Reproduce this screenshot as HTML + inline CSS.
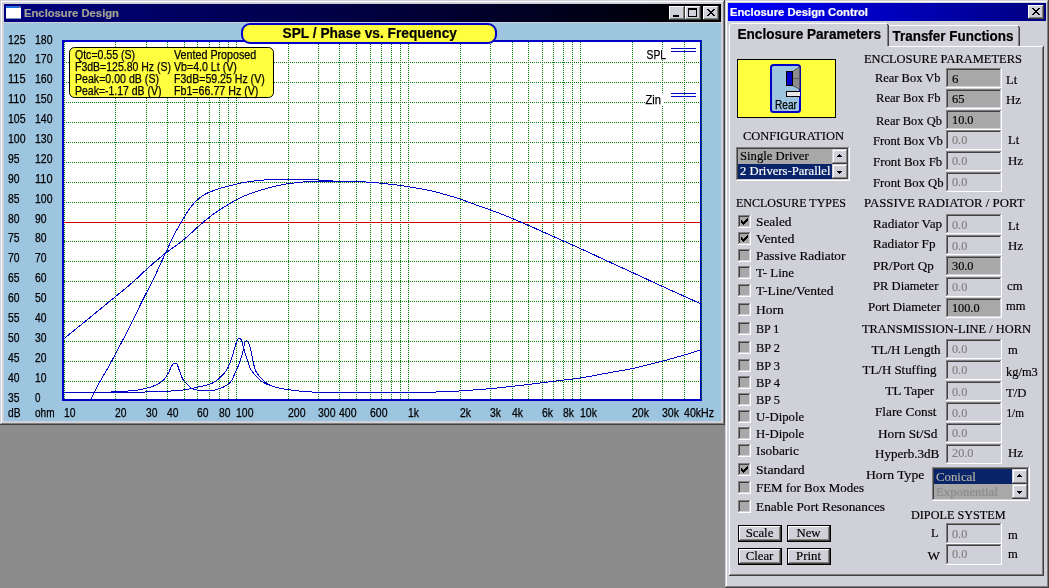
<!DOCTYPE html>
<html><head><meta charset="utf-8"><title>Enclosure Design</title>
<style>
html,body{margin:0;padding:0;background:#8c8c8c;}
body{width:1049px;height:588px;overflow:hidden;font-family:"Liberation Sans",sans-serif;}
svg{display:block;will-change:transform;}
text{white-space:pre;}
</style></head>
<body>
<svg width="1049" height="588" viewBox="0 0 1049 588">
<defs>
<linearGradient id="gradL" x1="0" x2="1" y1="0" y2="0"><stop offset="0" stop-color="#000080"/><stop offset="1" stop-color="#000000"/></linearGradient>
<linearGradient id="gradR" x1="0" x2="1" y1="0" y2="0"><stop offset="0" stop-color="#0000ff"/><stop offset="1" stop-color="#000080"/></linearGradient>
<clipPath id="plotclip"><rect x="64" y="42" width="636" height="357"/></clipPath>
</defs>
<rect x="0" y="0" width="1049" height="588" fill="#8c8c8c" />
<g id="chartwin">
<rect x="0" y="0" width="725" height="425" fill="#d0d0d8" />
<rect x="0" y="424" width="725" height="1" fill="#404040" />
<rect x="724" y="0" width="1" height="425" fill="#404040" />
<rect x="1" y="423" width="723" height="1" fill="#808080" />
<rect x="723" y="1" width="1" height="423" fill="#808080" />
<rect x="1" y="1" width="722" height="1" fill="#ffffff" />
<rect x="1" y="1" width="1" height="422" fill="#ffffff" />
<rect x="4" y="4" width="717" height="18" fill="url(#gradL)" />
<rect x="6" y="6" width="15" height="13" fill="#ffffff" />
<rect x="6" y="6" width="15" height="2" fill="#1e6ee0" />
<rect x="19" y="7" width="1" height="1" fill="#ff6a00" />
<rect x="6" y="18" width="15" height="1" fill="#7d98c8" />
<text x="24" y="17" font-family="Liberation Sans" font-size="11" font-weight="bold" fill="#a4a494" stroke="#a4a494" stroke-width="0.2" text-anchor="start" textLength="95" lengthAdjust="spacingAndGlyphs" >Enclosure Design</text>
<rect x="669" y="6" width="16" height="14" fill="#d0d0d8" />
<rect x="669" y="6" width="15" height="1" fill="#ffffff" />
<rect x="669" y="6" width="1" height="13" fill="#ffffff" />
<rect x="669" y="19" width="16" height="1" fill="#404040" />
<rect x="684" y="6" width="1" height="14" fill="#404040" />
<rect x="670" y="18" width="14" height="1" fill="#808080" />
<rect x="683" y="7" width="1" height="12" fill="#808080" />
<rect x="685" y="6" width="16" height="14" fill="#d0d0d8" />
<rect x="685" y="6" width="15" height="1" fill="#ffffff" />
<rect x="685" y="6" width="1" height="13" fill="#ffffff" />
<rect x="685" y="19" width="16" height="1" fill="#404040" />
<rect x="700" y="6" width="1" height="14" fill="#404040" />
<rect x="686" y="18" width="14" height="1" fill="#808080" />
<rect x="699" y="7" width="1" height="12" fill="#808080" />
<rect x="703" y="6" width="16" height="14" fill="#d0d0d8" />
<rect x="703" y="6" width="15" height="1" fill="#ffffff" />
<rect x="703" y="6" width="1" height="13" fill="#ffffff" />
<rect x="703" y="19" width="16" height="1" fill="#404040" />
<rect x="718" y="6" width="1" height="14" fill="#404040" />
<rect x="704" y="18" width="14" height="1" fill="#808080" />
<rect x="717" y="7" width="1" height="12" fill="#808080" />
<rect x="673" y="15" width="6" height="2" fill="#000" />
<rect x="688" y="8" width="9" height="9" fill="#000" />
<rect x="689" y="10" width="7" height="6" fill="#d0d0d8" />
<rect x="707" y="9" width="2" height="1" fill="#000" />
<rect x="713" y="9" width="2" height="1" fill="#000" />
<rect x="708" y="10" width="2" height="1" fill="#000" />
<rect x="712" y="10" width="2" height="1" fill="#000" />
<rect x="709" y="11" width="2" height="1" fill="#000" />
<rect x="711" y="11" width="2" height="1" fill="#000" />
<rect x="710" y="12" width="2" height="1" fill="#000" />
<rect x="710" y="12" width="2" height="1" fill="#000" />
<rect x="711" y="13" width="2" height="1" fill="#000" />
<rect x="709" y="13" width="2" height="1" fill="#000" />
<rect x="712" y="14" width="2" height="1" fill="#000" />
<rect x="708" y="14" width="2" height="1" fill="#000" />
<rect x="713" y="15" width="2" height="1" fill="#000" />
<rect x="707" y="15" width="2" height="1" fill="#000" />
<rect x="4" y="23" width="717" height="398" fill="#9ec5e0" />
<rect x="62" y="40" width="640" height="361" fill="#0000c8" />
<rect x="64" y="42" width="636" height="357" fill="#ffffff" />
<g stroke="#008000" stroke-width="1" stroke-dasharray="1,1" shape-rendering="crispEdges">
<line x1="64" x2="700" y1="62.5" y2="62.5"/>
<line x1="64" x2="700" y1="82.5" y2="82.5"/>
<line x1="64" x2="700" y1="102.5" y2="102.5"/>
<line x1="64" x2="700" y1="122.5" y2="122.5"/>
<line x1="64" x2="700" y1="142.5" y2="142.5"/>
<line x1="64" x2="700" y1="162.5" y2="162.5"/>
<line x1="64" x2="700" y1="182.5" y2="182.5"/>
<line x1="64" x2="700" y1="202.5" y2="202.5"/>
<line x1="64" x2="700" y1="241.5" y2="241.5"/>
<line x1="64" x2="700" y1="261.5" y2="261.5"/>
<line x1="64" x2="700" y1="281.5" y2="281.5"/>
<line x1="64" x2="700" y1="301.5" y2="301.5"/>
<line x1="64" x2="700" y1="321.5" y2="321.5"/>
<line x1="64" x2="700" y1="341.5" y2="341.5"/>
<line x1="64" x2="700" y1="361.5" y2="361.5"/>
<line x1="64" x2="700" y1="381.5" y2="381.5"/>
<line x1="64.5" x2="64.5" y1="42" y2="399"/>
<line x1="115.5" x2="115.5" y1="42" y2="399"/>
<line x1="146.5" x2="146.5" y1="42" y2="399"/>
<line x1="167.5" x2="167.5" y1="42" y2="399"/>
<line x1="184.5" x2="184.5" y1="42" y2="399"/>
<line x1="197.5" x2="197.5" y1="42" y2="399"/>
<line x1="209.5" x2="209.5" y1="42" y2="399"/>
<line x1="219.5" x2="219.5" y1="42" y2="399"/>
<line x1="228.5" x2="228.5" y1="42" y2="399"/>
<line x1="236.5" x2="236.5" y1="42" y2="399"/>
<line x1="288.5" x2="288.5" y1="42" y2="399"/>
<line x1="318.5" x2="318.5" y1="42" y2="399"/>
<line x1="339.5" x2="339.5" y1="42" y2="399"/>
<line x1="356.5" x2="356.5" y1="42" y2="399"/>
<line x1="370.5" x2="370.5" y1="42" y2="399"/>
<line x1="381.5" x2="381.5" y1="42" y2="399"/>
<line x1="391.5" x2="391.5" y1="42" y2="399"/>
<line x1="400.5" x2="400.5" y1="42" y2="399"/>
<line x1="408.5" x2="408.5" y1="42" y2="399"/>
<line x1="460.5" x2="460.5" y1="42" y2="399"/>
<line x1="490.5" x2="490.5" y1="42" y2="399"/>
<line x1="512.5" x2="512.5" y1="42" y2="399"/>
<line x1="528.5" x2="528.5" y1="42" y2="399"/>
<line x1="542.5" x2="542.5" y1="42" y2="399"/>
<line x1="553.5" x2="553.5" y1="42" y2="399"/>
<line x1="563.5" x2="563.5" y1="42" y2="399"/>
<line x1="572.5" x2="572.5" y1="42" y2="399"/>
<line x1="580.5" x2="580.5" y1="42" y2="399"/>
<line x1="632.5" x2="632.5" y1="42" y2="399"/>
<line x1="662.5" x2="662.5" y1="42" y2="399"/>
<line x1="684.5" x2="684.5" y1="42" y2="399"/>
<line x1="701.5" x2="701.5" y1="42" y2="399"/>
</g>
<rect x="700" y="40" width="1" height="361" fill="#0000c8" />
<rect x="64" y="222" width="636" height="1" fill="#d00000" />
<g id="curves" clip-path="url(#plotclip)">
<path d="M64,338.6 L65,337.8 L66,337.0 L67,336.2 L68,335.4 L69,334.5 L70,333.7 L71,332.9 L72,332.1 L73,331.3 L74,330.5 L75,329.7 L76,328.9 L77,328.0 L78,327.2 L79,326.4 L80,325.6 L81,324.8 L82,324.0 L83,323.2 L84,322.3 L85,321.5 L86,320.7 L87,319.9 L88,319.1 L89,318.3 L90,317.5 L91,316.6 L92,315.8 L93,315.0 L94,314.2 L95,313.4 L96,312.5 L97,311.7 L98,310.9 L99,310.1 L100,309.3 L101,308.4 L102,307.6 L103,306.8 L104,306.0 L105,305.2 L106,304.3 L107,303.5 L108,302.7 L109,301.9 L110,301.1 L111,300.2 L112,299.4 L113,298.6 L114,297.8 L115,297.0 L116,296.1 L117,295.3 L118,294.5 L119,293.7 L120,292.9 L121,292.1 L122,291.3 L123,290.4 L124,289.6 L125,288.8 L126,288.0 L127,287.1 L128,286.3 L129,285.5 L130,284.6 L131,283.7 L132,282.9 L133,282.0 L134,281.1 L135,280.2 L136,279.3 L137,278.3 L138,277.4 L139,276.5 L140,275.5 L141,274.6 L142,273.6 L143,272.7 L144,271.7 L145,270.8 L146,269.9 L147,268.9 L148,268.0 L149,267.1 L150,266.2 L151,265.3 L152,264.5 L153,263.6 L154,262.7 L155,261.9 L156,261.0 L157,260.2 L158,259.3 L159,258.5 L160,257.7 L161,256.8 L162,256.0 L163,255.2 L164,254.4 L165,253.7 L166,252.9 L167,252.1 L168,251.4 L169,250.6 L170,249.9 L171,249.2 L172,248.4 L173,247.7 L174,247.0 L175,246.3 L176,245.5 L177,244.8 L178,244.1 L179,243.3 L180,242.5 L181,241.8 L182,241.0 L183,240.2 L184,239.4 L185,238.5 L186,237.7 L187,236.8 L188,235.9 L189,235.0 L190,234.1 L191,233.2 L192,232.3 L193,231.4 L194,230.5 L195,229.6 L196,228.6 L197,227.7 L198,226.8 L199,225.9 L200,225.0 L201,224.1 L202,223.3 L203,222.4 L204,221.6 L205,220.7 L206,219.9 L207,219.1 L208,218.3 L209,217.5 L210,216.7 L211,216.0 L212,215.2 L213,214.5 L214,213.7 L215,213.0 L216,212.3 L217,211.6 L218,210.9 L219,210.3 L220,209.6 L221,209.0 L222,208.3 L223,207.7 L224,207.1 L225,206.5 L226,205.9 L227,205.3 L228,204.7 L229,204.1 L230,203.5 L231,202.9 L232,202.3 L233,201.7 L234,201.1 L235,200.6 L236,200.0 L237,199.5 L238,199.0 L239,198.4 L240,197.9 L241,197.5 L242,197.0 L243,196.6 L244,196.1 L245,195.7 L246,195.3 L247,194.9 L248,194.5 L249,194.1 L250,193.7 L251,193.4 L252,193.0 L253,192.7 L254,192.3 L255,192.0 L256,191.7 L257,191.3 L258,191.0 L259,190.7 L260,190.4 L261,190.1 L262,189.8 L263,189.5 L264,189.2 L265,188.9 L266,188.6 L267,188.3 L268,188.0 L269,187.8 L270,187.5 L271,187.2 L272,187.0 L273,186.7 L274,186.5 L275,186.3 L276,186.0 L277,185.8 L278,185.6 L279,185.4 L280,185.2 L281,185.0 L282,184.8 L283,184.6 L284,184.4 L285,184.2 L286,184.1 L287,183.9 L288,183.8 L289,183.6 L290,183.5 L291,183.3 L292,183.2 L293,183.1 L294,183.0 L295,182.9 L296,182.7 L297,182.6 L298,182.5 L299,182.4 L300,182.3 L301,182.2 L302,182.1 L303,182.0 L304,181.9 L305,181.8 L306,181.7 L307,181.7 L308,181.6 L309,181.5 L310,181.4 L311,181.4 L312,181.3 L313,181.3 L314,181.2 L315,181.2 L316,181.1 L317,181.1 L318,181.1 L319,181.1 L320,181.0 L321,181.0 L322,181.0 L323,181.0 L324,181.0 L325,181.0 L326,181.0 L327,181.0 L328,181.0 L329,181.0 L330,181.0 L331,181.0 L332,181.0 L333,181.0 L334,181.0 L335,181.0 L336,181.0 L337,181.0 L338,181.0 L339,181.0 L340,181.0 L341,181.0 L342,181.0 L343,181.0 L344,181.0 L345,181.0 L346,181.0 L347,181.0 L348,181.1 L349,181.1 L350,181.1 L351,181.1 L352,181.2 L353,181.2 L354,181.2 L355,181.3 L356,181.3 L357,181.4 L358,181.4 L359,181.5 L360,181.6 L361,181.6 L362,181.7 L363,181.8 L364,181.8 L365,181.9 L366,182.0 L367,182.0 L368,182.1 L369,182.2 L370,182.3 L371,182.3 L372,182.4 L373,182.5 L374,182.6 L375,182.7 L376,182.8 L377,182.8 L378,182.9 L379,183.0 L380,183.1 L381,183.2 L382,183.3 L383,183.4 L384,183.5 L385,183.6 L386,183.7 L387,183.8 L388,184.0 L389,184.1 L390,184.2 L391,184.3 L392,184.4 L393,184.6 L394,184.7 L395,184.8 L396,184.9 L397,185.1 L398,185.2 L399,185.3 L400,185.5 L401,185.6 L402,185.8 L403,185.9 L404,186.1 L405,186.2 L406,186.4 L407,186.5 L408,186.7 L409,186.9 L410,187.0 L411,187.2 L412,187.3 L413,187.5 L414,187.7 L415,187.8 L416,188.0 L417,188.2 L418,188.3 L419,188.5 L420,188.7 L421,188.9 L422,189.1 L423,189.3 L424,189.5 L425,189.7 L426,189.9 L427,190.1 L428,190.3 L429,190.5 L430,190.7 L431,190.9 L432,191.1 L433,191.4 L434,191.6 L435,191.8 L436,192.1 L437,192.3 L438,192.6 L439,192.8 L440,193.1 L441,193.3 L442,193.6 L443,193.9 L444,194.2 L445,194.4 L446,194.7 L447,195.0 L448,195.3 L449,195.6 L450,195.9 L451,196.2 L452,196.5 L453,196.8 L454,197.1 L455,197.4 L456,197.7 L457,198.1 L458,198.4 L459,198.7 L460,199.1 L461,199.4 L462,199.8 L463,200.1 L464,200.5 L465,200.8 L466,201.2 L467,201.6 L468,201.9 L469,202.3 L470,202.7 L471,203.0 L472,203.4 L473,203.8 L474,204.1 L475,204.5 L476,204.9 L477,205.2 L478,205.6 L479,205.9 L480,206.3 L481,206.6 L482,207.0 L483,207.3 L484,207.7 L485,208.0 L486,208.4 L487,208.7 L488,209.1 L489,209.4 L490,209.8 L491,210.2 L492,210.5 L493,210.9 L494,211.3 L495,211.6 L496,212.0 L497,212.4 L498,212.8 L499,213.1 L500,213.5 L501,213.9 L502,214.3 L503,214.7 L504,215.1 L505,215.5 L506,215.9 L507,216.3 L508,216.7 L509,217.1 L510,217.5 L511,218.0 L512,218.4 L513,218.8 L514,219.2 L515,219.6 L516,220.0 L517,220.5 L518,220.9 L519,221.3 L520,221.7 L521,222.2 L522,222.6 L523,223.0 L524,223.5 L525,223.9 L526,224.3 L527,224.8 L528,225.2 L529,225.6 L530,226.1 L531,226.5 L532,227.0 L533,227.4 L534,227.8 L535,228.3 L536,228.7 L537,229.2 L538,229.6 L539,230.1 L540,230.5 L541,231.0 L542,231.4 L543,231.9 L544,232.3 L545,232.8 L546,233.2 L547,233.7 L548,234.1 L549,234.6 L550,235.0 L551,235.5 L552,235.9 L553,236.4 L554,236.8 L555,237.2 L556,237.7 L557,238.1 L558,238.6 L559,239.0 L560,239.5 L561,239.9 L562,240.4 L563,240.8 L564,241.2 L565,241.7 L566,242.1 L567,242.6 L568,243.0 L569,243.5 L570,243.9 L571,244.4 L572,244.8 L573,245.2 L574,245.7 L575,246.1 L576,246.6 L577,247.0 L578,247.5 L579,247.9 L580,248.4 L581,248.9 L582,249.3 L583,249.8 L584,250.2 L585,250.7 L586,251.1 L587,251.6 L588,252.1 L589,252.5 L590,253.0 L591,253.4 L592,253.9 L593,254.4 L594,254.8 L595,255.3 L596,255.8 L597,256.2 L598,256.7 L599,257.2 L600,257.6 L601,258.1 L602,258.6 L603,259.0 L604,259.5 L605,260.0 L606,260.4 L607,260.9 L608,261.3 L609,261.8 L610,262.3 L611,262.7 L612,263.2 L613,263.6 L614,264.1 L615,264.6 L616,265.0 L617,265.5 L618,265.9 L619,266.4 L620,266.9 L621,267.3 L622,267.8 L623,268.2 L624,268.7 L625,269.1 L626,269.6 L627,270.1 L628,270.5 L629,271.0 L630,271.4 L631,271.9 L632,272.4 L633,272.8 L634,273.3 L635,273.7 L636,274.2 L637,274.7 L638,275.1 L639,275.6 L640,276.1 L641,276.5 L642,277.0 L643,277.4 L644,277.9 L645,278.4 L646,278.8 L647,279.3 L648,279.8 L649,280.2 L650,280.7 L651,281.2 L652,281.6 L653,282.1 L654,282.5 L655,283.0 L656,283.5 L657,283.9 L658,284.4 L659,284.9 L660,285.3 L661,285.8 L662,286.2 L663,286.7 L664,287.1 L665,287.6 L666,288.1 L667,288.5 L668,289.0 L669,289.4 L670,289.9 L671,290.3 L672,290.8 L673,291.2 L674,291.7 L675,292.1 L676,292.6 L677,293.0 L678,293.5 L679,293.9 L680,294.4 L681,294.8 L682,295.3 L683,295.7 L684,296.2 L685,296.6 L686,297.1 L687,297.6 L688,298.0 L689,298.5 L690,298.9 L691,299.4 L692,299.8 L693,300.3 L694,300.7 L695,301.2 L696,301.6 L697,302.1 L698,302.5 L699,303.0 L700,303.4" fill="none" stroke="#0000c8" stroke-width="1" stroke-linejoin="round" shape-rendering="crispEdges"/>
<path d="M91,399.0 L92,396.9 L93,394.8 L94,392.7 L95,390.7 L96,388.7 L97,386.8 L98,384.9 L99,383.2 L100,381.4 L101,379.7 L102,378.0 L103,376.3 L104,374.6 L105,372.9 L106,371.2 L107,369.4 L108,367.7 L109,365.9 L110,364.1 L111,362.3 L112,360.5 L113,358.6 L114,356.8 L115,354.9 L116,353.1 L117,351.2 L118,349.3 L119,347.4 L120,345.4 L121,343.5 L122,341.6 L123,339.6 L124,337.7 L125,335.7 L126,333.8 L127,331.8 L128,329.8 L129,327.8 L130,325.8 L131,323.9 L132,321.9 L133,319.9 L134,317.8 L135,315.8 L136,313.8 L137,311.8 L138,309.7 L139,307.7 L140,305.6 L141,303.6 L142,301.6 L143,299.5 L144,297.5 L145,295.6 L146,293.6 L147,291.7 L148,289.7 L149,287.8 L150,285.9 L151,284.0 L152,282.0 L153,280.0 L154,277.9 L155,275.8 L156,273.7 L157,271.5 L158,269.3 L159,267.1 L160,265.0 L161,262.8 L162,260.6 L163,258.5 L164,256.3 L165,254.1 L166,252.0 L167,249.8 L168,247.7 L169,245.5 L170,243.4 L171,241.3 L172,239.2 L173,237.1 L174,235.1 L175,233.2 L176,231.3 L177,229.5 L178,227.7 L179,226.0 L180,224.3 L181,222.6 L182,220.9 L183,219.2 L184,217.5 L185,215.8 L186,214.1 L187,212.5 L188,211.0 L189,209.5 L190,208.2 L191,206.8 L192,205.6 L193,204.4 L194,203.3 L195,202.2 L196,201.2 L197,200.2 L198,199.3 L199,198.5 L200,197.7 L201,196.9 L202,196.2 L203,195.5 L204,194.9 L205,194.3 L206,193.8 L207,193.3 L208,192.8 L209,192.4 L210,192.0 L211,191.6 L212,191.2 L213,190.8 L214,190.4 L215,190.1 L216,189.7 L217,189.4 L218,189.0 L219,188.7 L220,188.4 L221,188.1 L222,187.9 L223,187.6 L224,187.3 L225,187.1 L226,186.8 L227,186.6 L228,186.3 L229,186.0 L230,185.8 L231,185.5 L232,185.2 L233,185.0 L234,184.7 L235,184.5 L236,184.2 L237,184.0 L238,183.8 L239,183.5 L240,183.3 L241,183.1 L242,182.9 L243,182.8 L244,182.6 L245,182.4 L246,182.2 L247,182.1 L248,181.9 L249,181.8 L250,181.6 L251,181.5 L252,181.3 L253,181.2 L254,181.1 L255,180.9 L256,180.8 L257,180.7 L258,180.6 L259,180.4 L260,180.3 L261,180.2 L262,180.1 L263,180.1 L264,180.0 L265,179.9 L266,179.8 L267,179.8 L268,179.7 L269,179.6 L270,179.6 L271,179.5 L272,179.5 L273,179.4 L274,179.4 L275,179.3 L276,179.3 L277,179.3 L278,179.2 L279,179.2 L280,179.2 L281,179.2 L282,179.2 L283,179.2 L284,179.2 L285,179.2 L286,179.2 L287,179.2 L288,179.2 L289,179.2 L290,179.2 L291,179.2 L292,179.2 L293,179.2 L294,179.2 L295,179.2 L296,179.2 L297,179.2 L298,179.2 L299,179.2 L300,179.2 L301,179.2 L302,179.2 L303,179.2 L304,179.2 L305,179.2 L306,179.3 L307,179.3 L308,179.3 L309,179.3 L310,179.4 L311,179.4 L312,179.4 L313,179.5 L314,179.5 L315,179.6 L316,179.7 L317,179.8 L318,179.9 L319,180.1 L320,180.2 L321,180.3 L322,180.5 L323,180.6 L324,180.6 L325,180.7 L326,180.8 L327,180.8 L328,180.8 L329,180.9 L330,180.9 L331,180.9 L332,180.9 L333,181.0 L334,181.0" fill="none" stroke="#0000c8" stroke-width="1" stroke-linejoin="round" shape-rendering="crispEdges"/>
<path d="M64,392.5 L65,392.5 L66,392.5 L67,392.5 L68,392.5 L69,392.5 L70,392.5 L71,392.5 L72,392.5 L73,392.5 L74,392.5 L75,392.5 L76,392.5 L77,392.5 L78,392.5 L79,392.5 L80,392.5 L81,392.5 L82,392.5 L83,392.5 L84,392.5 L85,392.5 L86,392.5 L87,392.5 L88,392.5 L89,392.5 L90,392.5 L91,392.5 L92,392.5 L93,392.5 L94,392.5 L95,392.5 L96,392.5 L97,392.5 L98,392.5 L99,392.5 L100,392.4 L101,392.4 L102,392.4 L103,392.4 L104,392.4 L105,392.4 L106,392.4 L107,392.4 L108,392.4 L109,392.4 L110,392.4 L111,392.4 L112,392.4 L113,392.4 L114,392.4 L115,392.4 L116,392.4 L117,392.4 L118,392.4 L119,392.4 L120,392.4 L121,392.4 L122,392.4 L123,392.4 L124,392.4 L125,392.4 L126,392.4 L127,392.3 L128,392.3 L129,392.3 L130,392.3 L131,392.3 L132,392.3 L133,392.3 L134,392.2 L135,392.2 L136,392.2 L137,392.2 L138,392.1 L139,392.1 L140,392.1 L141,392.1 L142,392.0 L143,392.0 L144,392.0 L145,392.0 L146,391.9 L147,391.9 L148,391.9 L149,391.8 L150,391.8 L151,391.8 L152,391.8 L153,391.7 L154,391.7 L155,391.7 L156,391.6 L157,391.6 L158,391.5 L159,391.5 L160,391.5 L161,391.4 L162,391.4 L163,391.4 L164,391.3 L165,391.3 L166,391.2 L167,391.2 L168,391.2 L169,391.1 L170,391.1 L171,391.0 L172,390.9 L173,390.9 L174,390.8 L175,390.7 L176,390.7 L177,390.6 L178,390.5 L179,390.4 L180,390.3 L181,390.2 L182,390.1 L183,390.0 L184,389.8 L185,389.7 L186,389.5 L187,389.4 L188,389.2 L189,389.0 L190,388.9 L191,388.7 L192,388.5 L193,388.3 L194,388.0 L195,387.8 L196,387.6 L197,387.4 L198,387.1 L199,386.9 L200,386.7 L201,386.5 L202,386.2 L203,386.0 L204,385.8 L205,385.6 L206,385.3 L207,385.1 L208,384.8 L209,384.4 L210,384.1 L211,383.6 L212,383.2 L213,382.7 L214,382.1 L215,381.5 L216,380.9 L217,380.2 L218,379.4 L219,378.5 L220,377.5 L221,376.5 L222,375.5 L223,374.5 L224,373.4 L225,372.2 L226,370.9 L227,369.4 L228,367.5 L229,365.3 L230,362.7 L231,360.1 L232,357.0 L233,353.8 L234,350.5 L235,346.9 L236,343.5 L237,340.8 L238,338.8 L239,338.4 L240,338.5 L241,339.5 L242,341.8 L243,345.7 L244,349.4 L245,352.8 L246,356.0 L247,359.1 L248,362.3 L249,365.2 L250,367.8 L251,369.7 L252,371.2 L253,372.6 L254,373.8 L255,375.0 L256,376.1 L257,377.2 L258,378.2 L259,379.2 L260,380.0 L261,380.8 L262,381.5 L263,382.1 L264,382.7 L265,383.2 L266,383.7 L267,384.2 L268,384.6 L269,385.0 L270,385.4 L271,385.8 L272,386.1 L273,386.5 L274,386.8 L275,387.1 L276,387.3 L277,387.6 L278,387.8 L279,388.0 L280,388.2 L281,388.4 L282,388.6 L283,388.8 L284,389.0 L285,389.1 L286,389.3 L287,389.5 L288,389.6 L289,389.8 L290,389.9 L291,390.1 L292,390.2 L293,390.3 L294,390.5 L295,390.6 L296,390.7 L297,390.8 L298,390.9 L299,391.0 L300,391.1 L301,391.2 L302,391.3 L303,391.4 L304,391.4 L305,391.5 L306,391.6 L307,391.7 L308,391.7 L309,391.8 L310,391.9 L311,391.9 L312,392.0 L313,392.1 L314,392.1 L315,392.1 L316,392.2 L317,392.2 L318,392.3 L319,392.3 L320,392.3 L321,392.3 L322,392.3 L323,392.3 L324,392.3 L325,392.3 L326,392.3 L327,392.3 L328,392.3 L329,392.4 L330,392.4 L331,392.4 L332,392.4 L333,392.4 L334,392.4 L335,392.4 L336,392.4 L337,392.4 L338,392.4 L339,392.4 L340,392.4 L341,392.4 L342,392.4 L343,392.4 L344,392.4 L345,392.4 L346,392.4 L347,392.4 L348,392.4 L349,392.5 L350,392.5 L351,392.5 L352,392.5 L353,392.5 L354,392.5 L355,392.5 L356,392.5 L357,392.5 L358,392.5 L359,392.5 L360,392.5 L361,392.5 L362,392.5 L363,392.5 L364,392.5 L365,392.5 L366,392.5 L367,392.5 L368,392.5 L369,392.5 L370,392.5 L371,392.5 L372,392.5 L373,392.5 L374,392.5 L375,392.5 L376,392.5 L377,392.5 L378,392.5 L379,392.5 L380,392.5 L381,392.5 L382,392.5 L383,392.5 L384,392.5 L385,392.5 L386,392.5 L387,392.5 L388,392.5 L389,392.5 L390,392.5 L391,392.5 L392,392.5 L393,392.5 L394,392.5 L395,392.5 L396,392.5 L397,392.5 L398,392.5 L399,392.5 L400,392.5 L401,392.4 L402,392.4 L403,392.4 L404,392.4 L405,392.4 L406,392.4 L407,392.4 L408,392.4 L409,392.4 L410,392.4 L411,392.4 L412,392.4 L413,392.4 L414,392.4 L415,392.4 L416,392.3 L417,392.3 L418,392.3 L419,392.3 L420,392.3 L421,392.3 L422,392.3 L423,392.3 L424,392.3 L425,392.3 L426,392.2 L427,392.2 L428,392.2 L429,392.2 L430,392.2 L431,392.2 L432,392.2 L433,392.1 L434,392.1 L435,392.0 L436,392.0 L437,391.9 L438,391.9 L439,391.8 L440,391.8 L441,391.7 L442,391.6 L443,391.6 L444,391.5 L445,391.5 L446,391.5 L447,391.4 L448,391.4 L449,391.3 L450,391.3 L451,391.3 L452,391.2 L453,391.2 L454,391.2 L455,391.1 L456,391.1 L457,391.1 L458,391.0 L459,391.0 L460,390.9 L461,390.9 L462,390.8 L463,390.7 L464,390.7 L465,390.6 L466,390.5 L467,390.5 L468,390.4 L469,390.3 L470,390.2 L471,390.2 L472,390.1 L473,390.0 L474,389.9 L475,389.9 L476,389.8 L477,389.7 L478,389.6 L479,389.6 L480,389.5 L481,389.4 L482,389.3 L483,389.3 L484,389.2 L485,389.1 L486,389.0 L487,388.9 L488,388.8 L489,388.7 L490,388.7 L491,388.6 L492,388.5 L493,388.4 L494,388.3 L495,388.2 L496,388.1 L497,388.0 L498,387.9 L499,387.8 L500,387.7 L501,387.5 L502,387.4 L503,387.3 L504,387.2 L505,387.1 L506,387.0 L507,386.9 L508,386.8 L509,386.7 L510,386.6 L511,386.4 L512,386.3 L513,386.2 L514,386.1 L515,386.0 L516,385.9 L517,385.8 L518,385.7 L519,385.6 L520,385.5 L521,385.3 L522,385.2 L523,385.1 L524,385.0 L525,384.9 L526,384.8 L527,384.7 L528,384.5 L529,384.4 L530,384.3 L531,384.2 L532,384.1 L533,383.9 L534,383.8 L535,383.7 L536,383.5 L537,383.4 L538,383.3 L539,383.2 L540,383.0 L541,382.9 L542,382.8 L543,382.6 L544,382.5 L545,382.4 L546,382.3 L547,382.1 L548,382.0 L549,381.9 L550,381.7 L551,381.6 L552,381.5 L553,381.4 L554,381.2 L555,381.1 L556,381.0 L557,380.9 L558,380.8 L559,380.6 L560,380.5 L561,380.4 L562,380.3 L563,380.2 L564,380.1 L565,379.9 L566,379.8 L567,379.7 L568,379.6 L569,379.5 L570,379.4 L571,379.2 L572,379.1 L573,379.0 L574,378.9 L575,378.7 L576,378.6 L577,378.5 L578,378.3 L579,378.2 L580,378.0 L581,377.9 L582,377.7 L583,377.6 L584,377.4 L585,377.3 L586,377.1 L587,376.9 L588,376.8 L589,376.6 L590,376.4 L591,376.2 L592,376.0 L593,375.8 L594,375.6 L595,375.5 L596,375.3 L597,375.1 L598,374.9 L599,374.7 L600,374.5 L601,374.3 L602,374.1 L603,373.9 L604,373.7 L605,373.5 L606,373.3 L607,373.2 L608,373.0 L609,372.8 L610,372.6 L611,372.4 L612,372.3 L613,372.1 L614,371.9 L615,371.7 L616,371.6 L617,371.4 L618,371.2 L619,371.0 L620,370.9 L621,370.7 L622,370.5 L623,370.3 L624,370.1 L625,370.0 L626,369.8 L627,369.6 L628,369.4 L629,369.2 L630,369.0 L631,368.8 L632,368.6 L633,368.4 L634,368.2 L635,367.9 L636,367.7 L637,367.5 L638,367.3 L639,367.0 L640,366.8 L641,366.6 L642,366.3 L643,366.1 L644,365.9 L645,365.6 L646,365.4 L647,365.1 L648,364.9 L649,364.6 L650,364.4 L651,364.1 L652,363.9 L653,363.6 L654,363.3 L655,363.1 L656,362.8 L657,362.6 L658,362.3 L659,362.0 L660,361.8 L661,361.5 L662,361.3 L663,361.0 L664,360.7 L665,360.5 L666,360.2 L667,359.9 L668,359.6 L669,359.4 L670,359.1 L671,358.8 L672,358.5 L673,358.3 L674,358.0 L675,357.7 L676,357.4 L677,357.1 L678,356.8 L679,356.5 L680,356.3 L681,356.0 L682,355.7 L683,355.4 L684,355.1 L685,354.8 L686,354.5 L687,354.2 L688,353.9 L689,353.6 L690,353.3 L691,353.0 L692,352.7 L693,352.4 L694,352.1 L695,351.7 L696,351.4 L697,351.1 L698,350.8 L699,350.5 L700,350.2" fill="none" stroke="#0000c8" stroke-width="1" stroke-linejoin="round" shape-rendering="crispEdges"/>
<path d="M64,392.5 L65,392.5 L66,392.5 L67,392.5 L68,392.5 L69,392.5 L70,392.5 L71,392.5 L72,392.4 L73,392.4 L74,392.4 L75,392.4 L76,392.4 L77,392.4 L78,392.4 L79,392.4 L80,392.4 L81,392.4 L82,392.4 L83,392.4 L84,392.4 L85,392.4 L86,392.4 L87,392.4 L88,392.4 L89,392.3 L90,392.3 L91,392.3 L92,392.3 L93,392.3 L94,392.3 L95,392.3 L96,392.3 L97,392.3 L98,392.3 L99,392.2 L100,392.2 L101,392.2 L102,392.2 L103,392.2 L104,392.2 L105,392.2 L106,392.1 L107,392.1 L108,392.1 L109,392.1 L110,392.0 L111,392.0 L112,391.9 L113,391.9 L114,391.8 L115,391.8 L116,391.7 L117,391.7 L118,391.6 L119,391.6 L120,391.5 L121,391.5 L122,391.4 L123,391.3 L124,391.3 L125,391.2 L126,391.1 L127,391.1 L128,391.0 L129,390.9 L130,390.9 L131,390.8 L132,390.7 L133,390.6 L134,390.5 L135,390.4 L136,390.2 L137,390.1 L138,390.0 L139,389.8 L140,389.6 L141,389.4 L142,389.2 L143,389.0 L144,388.8 L145,388.5 L146,388.3 L147,388.0 L148,387.7 L149,387.5 L150,387.2 L151,386.9 L152,386.5 L153,386.2 L154,385.8 L155,385.4 L156,385.0 L157,384.5 L158,383.9 L159,383.3 L160,382.7 L161,382.0 L162,381.2 L163,380.4 L164,379.4 L165,378.2 L166,376.9 L167,375.3 L168,373.6 L169,371.7 L170,369.5 L171,367.3 L172,365.5 L173,363.8 L174,363.4 L175,363.4 L176,363.4 L177,364.0 L178,366.4 L179,369.4 L180,371.9 L181,374.8 L182,377.5 L183,379.6 L184,381.0 L185,382.2 L186,383.2 L187,384.2 L188,385.3 L189,386.3 L190,387.2 L191,387.9 L192,388.5 L193,389.0 L194,389.4 L195,389.7 L196,389.9 L197,390.1 L198,390.2 L199,390.3 L200,390.4 L201,390.4 L202,390.5 L203,390.5 L204,390.6 L205,390.6 L206,390.6 L207,390.6 L208,390.6 L209,390.5 L210,390.5 L211,390.4 L212,390.3 L213,390.3 L214,390.2 L215,390.0 L216,389.8 L217,389.5 L218,389.1 L219,388.8 L220,388.4 L221,388.1 L222,387.7 L223,387.2 L224,386.8 L225,386.2 L226,385.6 L227,385.0 L228,384.2 L229,383.4 L230,382.4 L231,381.3 L232,379.9 L233,378.0 L234,375.6 L235,373.2 L236,370.9 L237,368.8 L238,366.5 L239,364.1 L240,361.3 L241,358.1 L242,354.6 L243,350.8 L244,345.7 L245,342.0 L246,340.7 L247,340.9 L248,342.2 L249,344.2 L250,347.1 L251,350.9 L252,356.1 L253,361.0 L254,365.4 L255,369.1 L256,371.4 L257,373.1 L258,374.5 L259,375.7 L260,376.9 L261,378.0 L262,379.1 L263,380.1 L264,381.1 L265,381.9 L266,382.7 L267,383.4 L268,384.0 L269,384.6 L270,385.1 L271,385.6 L272,386.0 L273,386.3 L274,386.7 L275,387.0 L276,387.4" fill="none" stroke="#0000c8" stroke-width="1" stroke-linejoin="round" shape-rendering="crispEdges"/>
</g>
<rect x="646" y="49" width="21" height="11" fill="#fff" />
<rect x="645" y="94" width="18" height="11" fill="#fff" />
<text x="646.5" y="59" font-family="Liberation Sans" font-size="12" font-weight="normal" fill="#000" stroke="#000" stroke-width="0.25" text-anchor="start" textLength="19.5" lengthAdjust="spacingAndGlyphs" >SPL</text>
<text x="645.5" y="104" font-family="Liberation Sans" font-size="12" font-weight="normal" fill="#000" stroke="#000" stroke-width="0.25" text-anchor="start" textLength="15.5" lengthAdjust="spacingAndGlyphs" >Zin</text>
<rect x="671" y="48" width="25" height="1" fill="#0000c8" />
<rect x="671" y="51" width="25" height="1" fill="#0000c8" />
<rect x="671" y="93" width="25" height="1" fill="#0000c8" />
<rect x="671" y="96" width="25" height="1" fill="#0000c8" />
<rect x="242" y="24" width="254" height="19" rx="8" ry="8" fill="#ffff40" stroke="#0000c8" stroke-width="2"/>
<text x="282.5" y="38" font-family="Liberation Sans" font-size="14" font-weight="bold" fill="#000" stroke="#000" stroke-width="0.2" text-anchor="start" textLength="174.5" lengthAdjust="spacingAndGlyphs" >SPL / Phase vs. Frequency</text>
<rect x="69.5" y="47.5" width="204" height="50" rx="5" ry="5" fill="#ffff40" stroke="#000" stroke-width="1"/>
<text x="75" y="59" font-family="Liberation Sans" font-size="12" font-weight="normal" fill="#000" stroke="#000" stroke-width="0.25" text-anchor="start" textLength="60" lengthAdjust="spacingAndGlyphs" >Qtc=0.55 (S)</text>
<text x="174" y="59" font-family="Liberation Sans" font-size="12" font-weight="normal" fill="#000" stroke="#000" stroke-width="0.25" text-anchor="start" textLength="82.3" lengthAdjust="spacingAndGlyphs" >Vented Proposed</text>
<text x="75" y="71" font-family="Liberation Sans" font-size="12" font-weight="normal" fill="#000" stroke="#000" stroke-width="0.25" text-anchor="start" textLength="96" lengthAdjust="spacingAndGlyphs" >F3dB=125.80 Hz (S)</text>
<text x="174" y="71" font-family="Liberation Sans" font-size="12" font-weight="normal" fill="#000" stroke="#000" stroke-width="0.25" text-anchor="start" textLength="62.8" lengthAdjust="spacingAndGlyphs" >Vb=4.0 Lt (V)</text>
<text x="75" y="83" font-family="Liberation Sans" font-size="12" font-weight="normal" fill="#000" stroke="#000" stroke-width="0.25" text-anchor="start" textLength="84" lengthAdjust="spacingAndGlyphs" >Peak=0.00 dB (S)</text>
<text x="174" y="83" font-family="Liberation Sans" font-size="12" font-weight="normal" fill="#000" stroke="#000" stroke-width="0.25" text-anchor="start" textLength="90.7" lengthAdjust="spacingAndGlyphs" >F3dB=59.25 Hz (V)</text>
<text x="75" y="95" font-family="Liberation Sans" font-size="12" font-weight="normal" fill="#000" stroke="#000" stroke-width="0.25" text-anchor="start" textLength="86.5" lengthAdjust="spacingAndGlyphs" >Peak=-1.17 dB (V)</text>
<text x="174" y="95" font-family="Liberation Sans" font-size="12" font-weight="normal" fill="#000" stroke="#000" stroke-width="0.25" text-anchor="start" textLength="84.4" lengthAdjust="spacingAndGlyphs" >Fb1=66.77 Hz (V)</text>
<text x="8" y="44" font-family="Liberation Sans" font-size="12" font-weight="normal" fill="#000" stroke="#000" stroke-width="0.25" text-anchor="start" textLength="17.5" lengthAdjust="spacingAndGlyphs" >125</text>
<text x="35" y="44" font-family="Liberation Sans" font-size="12" font-weight="normal" fill="#000" stroke="#000" stroke-width="0.25" text-anchor="start" textLength="17.5" lengthAdjust="spacingAndGlyphs" >180</text>
<text x="8" y="63" font-family="Liberation Sans" font-size="12" font-weight="normal" fill="#000" stroke="#000" stroke-width="0.25" text-anchor="start" textLength="17.5" lengthAdjust="spacingAndGlyphs" >120</text>
<text x="35" y="63" font-family="Liberation Sans" font-size="12" font-weight="normal" fill="#000" stroke="#000" stroke-width="0.25" text-anchor="start" textLength="17.5" lengthAdjust="spacingAndGlyphs" >170</text>
<text x="8" y="83" font-family="Liberation Sans" font-size="12" font-weight="normal" fill="#000" stroke="#000" stroke-width="0.25" text-anchor="start" textLength="17.5" lengthAdjust="spacingAndGlyphs" >115</text>
<text x="35" y="83" font-family="Liberation Sans" font-size="12" font-weight="normal" fill="#000" stroke="#000" stroke-width="0.25" text-anchor="start" textLength="17.5" lengthAdjust="spacingAndGlyphs" >160</text>
<text x="8" y="103" font-family="Liberation Sans" font-size="12" font-weight="normal" fill="#000" stroke="#000" stroke-width="0.25" text-anchor="start" textLength="17.5" lengthAdjust="spacingAndGlyphs" >110</text>
<text x="35" y="103" font-family="Liberation Sans" font-size="12" font-weight="normal" fill="#000" stroke="#000" stroke-width="0.25" text-anchor="start" textLength="17.5" lengthAdjust="spacingAndGlyphs" >150</text>
<text x="8" y="123" font-family="Liberation Sans" font-size="12" font-weight="normal" fill="#000" stroke="#000" stroke-width="0.25" text-anchor="start" textLength="17.5" lengthAdjust="spacingAndGlyphs" >105</text>
<text x="35" y="123" font-family="Liberation Sans" font-size="12" font-weight="normal" fill="#000" stroke="#000" stroke-width="0.25" text-anchor="start" textLength="17.5" lengthAdjust="spacingAndGlyphs" >140</text>
<text x="8" y="143" font-family="Liberation Sans" font-size="12" font-weight="normal" fill="#000" stroke="#000" stroke-width="0.25" text-anchor="start" textLength="17.5" lengthAdjust="spacingAndGlyphs" >100</text>
<text x="35" y="143" font-family="Liberation Sans" font-size="12" font-weight="normal" fill="#000" stroke="#000" stroke-width="0.25" text-anchor="start" textLength="17.5" lengthAdjust="spacingAndGlyphs" >130</text>
<text x="8" y="163" font-family="Liberation Sans" font-size="12" font-weight="normal" fill="#000" stroke="#000" stroke-width="0.25" text-anchor="start" textLength="11.5" lengthAdjust="spacingAndGlyphs" >95</text>
<text x="35" y="163" font-family="Liberation Sans" font-size="12" font-weight="normal" fill="#000" stroke="#000" stroke-width="0.25" text-anchor="start" textLength="17.5" lengthAdjust="spacingAndGlyphs" >120</text>
<text x="8" y="183" font-family="Liberation Sans" font-size="12" font-weight="normal" fill="#000" stroke="#000" stroke-width="0.25" text-anchor="start" textLength="11.5" lengthAdjust="spacingAndGlyphs" >90</text>
<text x="35" y="183" font-family="Liberation Sans" font-size="12" font-weight="normal" fill="#000" stroke="#000" stroke-width="0.25" text-anchor="start" textLength="17.5" lengthAdjust="spacingAndGlyphs" >110</text>
<text x="8" y="203" font-family="Liberation Sans" font-size="12" font-weight="normal" fill="#000" stroke="#000" stroke-width="0.25" text-anchor="start" textLength="11.5" lengthAdjust="spacingAndGlyphs" >85</text>
<text x="35" y="203" font-family="Liberation Sans" font-size="12" font-weight="normal" fill="#000" stroke="#000" stroke-width="0.25" text-anchor="start" textLength="17.5" lengthAdjust="spacingAndGlyphs" >100</text>
<text x="8" y="223" font-family="Liberation Sans" font-size="12" font-weight="normal" fill="#000" stroke="#000" stroke-width="0.25" text-anchor="start" textLength="11.5" lengthAdjust="spacingAndGlyphs" >80</text>
<text x="35" y="223" font-family="Liberation Sans" font-size="12" font-weight="normal" fill="#000" stroke="#000" stroke-width="0.25" text-anchor="start" textLength="11.5" lengthAdjust="spacingAndGlyphs" >90</text>
<text x="8" y="242" font-family="Liberation Sans" font-size="12" font-weight="normal" fill="#000" stroke="#000" stroke-width="0.25" text-anchor="start" textLength="11.5" lengthAdjust="spacingAndGlyphs" >75</text>
<text x="35" y="242" font-family="Liberation Sans" font-size="12" font-weight="normal" fill="#000" stroke="#000" stroke-width="0.25" text-anchor="start" textLength="11.5" lengthAdjust="spacingAndGlyphs" >80</text>
<text x="8" y="262" font-family="Liberation Sans" font-size="12" font-weight="normal" fill="#000" stroke="#000" stroke-width="0.25" text-anchor="start" textLength="11.5" lengthAdjust="spacingAndGlyphs" >70</text>
<text x="35" y="262" font-family="Liberation Sans" font-size="12" font-weight="normal" fill="#000" stroke="#000" stroke-width="0.25" text-anchor="start" textLength="11.5" lengthAdjust="spacingAndGlyphs" >70</text>
<text x="8" y="282" font-family="Liberation Sans" font-size="12" font-weight="normal" fill="#000" stroke="#000" stroke-width="0.25" text-anchor="start" textLength="11.5" lengthAdjust="spacingAndGlyphs" >65</text>
<text x="35" y="282" font-family="Liberation Sans" font-size="12" font-weight="normal" fill="#000" stroke="#000" stroke-width="0.25" text-anchor="start" textLength="11.5" lengthAdjust="spacingAndGlyphs" >60</text>
<text x="8" y="302" font-family="Liberation Sans" font-size="12" font-weight="normal" fill="#000" stroke="#000" stroke-width="0.25" text-anchor="start" textLength="11.5" lengthAdjust="spacingAndGlyphs" >60</text>
<text x="35" y="302" font-family="Liberation Sans" font-size="12" font-weight="normal" fill="#000" stroke="#000" stroke-width="0.25" text-anchor="start" textLength="11.5" lengthAdjust="spacingAndGlyphs" >50</text>
<text x="8" y="322" font-family="Liberation Sans" font-size="12" font-weight="normal" fill="#000" stroke="#000" stroke-width="0.25" text-anchor="start" textLength="11.5" lengthAdjust="spacingAndGlyphs" >55</text>
<text x="35" y="322" font-family="Liberation Sans" font-size="12" font-weight="normal" fill="#000" stroke="#000" stroke-width="0.25" text-anchor="start" textLength="11.5" lengthAdjust="spacingAndGlyphs" >40</text>
<text x="8" y="342" font-family="Liberation Sans" font-size="12" font-weight="normal" fill="#000" stroke="#000" stroke-width="0.25" text-anchor="start" textLength="11.5" lengthAdjust="spacingAndGlyphs" >50</text>
<text x="35" y="342" font-family="Liberation Sans" font-size="12" font-weight="normal" fill="#000" stroke="#000" stroke-width="0.25" text-anchor="start" textLength="11.5" lengthAdjust="spacingAndGlyphs" >30</text>
<text x="8" y="362" font-family="Liberation Sans" font-size="12" font-weight="normal" fill="#000" stroke="#000" stroke-width="0.25" text-anchor="start" textLength="11.5" lengthAdjust="spacingAndGlyphs" >45</text>
<text x="35" y="362" font-family="Liberation Sans" font-size="12" font-weight="normal" fill="#000" stroke="#000" stroke-width="0.25" text-anchor="start" textLength="11.5" lengthAdjust="spacingAndGlyphs" >20</text>
<text x="8" y="382" font-family="Liberation Sans" font-size="12" font-weight="normal" fill="#000" stroke="#000" stroke-width="0.25" text-anchor="start" textLength="11.5" lengthAdjust="spacingAndGlyphs" >40</text>
<text x="35" y="382" font-family="Liberation Sans" font-size="12" font-weight="normal" fill="#000" stroke="#000" stroke-width="0.25" text-anchor="start" textLength="11.5" lengthAdjust="spacingAndGlyphs" >10</text>
<text x="8" y="402" font-family="Liberation Sans" font-size="12" font-weight="normal" fill="#000" stroke="#000" stroke-width="0.25" text-anchor="start" textLength="11.5" lengthAdjust="spacingAndGlyphs" >35</text>
<text x="35" y="402" font-family="Liberation Sans" font-size="12" font-weight="normal" fill="#000" stroke="#000" stroke-width="0.25" text-anchor="start" textLength="5.5" lengthAdjust="spacingAndGlyphs" >0</text>
<text x="8" y="417" font-family="Liberation Sans" font-size="12" font-weight="normal" fill="#000" stroke="#000" stroke-width="0.25" text-anchor="start" textLength="12.5" lengthAdjust="spacingAndGlyphs" >dB</text>
<text x="35" y="417" font-family="Liberation Sans" font-size="12" font-weight="normal" fill="#000" stroke="#000" stroke-width="0.25" text-anchor="start" textLength="19.5" lengthAdjust="spacingAndGlyphs" >ohm</text>
<text x="64" y="417" font-family="Liberation Sans" font-size="12" font-weight="normal" fill="#000" stroke="#000" stroke-width="0.25" text-anchor="start" textLength="11.5" lengthAdjust="spacingAndGlyphs" >10</text>
<text x="115" y="417" font-family="Liberation Sans" font-size="12" font-weight="normal" fill="#000" stroke="#000" stroke-width="0.25" text-anchor="start" textLength="11.5" lengthAdjust="spacingAndGlyphs" >20</text>
<text x="146" y="417" font-family="Liberation Sans" font-size="12" font-weight="normal" fill="#000" stroke="#000" stroke-width="0.25" text-anchor="start" textLength="11.5" lengthAdjust="spacingAndGlyphs" >30</text>
<text x="167" y="417" font-family="Liberation Sans" font-size="12" font-weight="normal" fill="#000" stroke="#000" stroke-width="0.25" text-anchor="start" textLength="11.5" lengthAdjust="spacingAndGlyphs" >40</text>
<text x="197" y="417" font-family="Liberation Sans" font-size="12" font-weight="normal" fill="#000" stroke="#000" stroke-width="0.25" text-anchor="start" textLength="11.5" lengthAdjust="spacingAndGlyphs" >60</text>
<text x="219" y="417" font-family="Liberation Sans" font-size="12" font-weight="normal" fill="#000" stroke="#000" stroke-width="0.25" text-anchor="start" textLength="11.5" lengthAdjust="spacingAndGlyphs" >80</text>
<text x="236" y="417" font-family="Liberation Sans" font-size="12" font-weight="normal" fill="#000" stroke="#000" stroke-width="0.25" text-anchor="start" textLength="17.5" lengthAdjust="spacingAndGlyphs" >100</text>
<text x="288" y="417" font-family="Liberation Sans" font-size="12" font-weight="normal" fill="#000" stroke="#000" stroke-width="0.25" text-anchor="start" textLength="17.5" lengthAdjust="spacingAndGlyphs" >200</text>
<text x="318" y="417" font-family="Liberation Sans" font-size="12" font-weight="normal" fill="#000" stroke="#000" stroke-width="0.25" text-anchor="start" textLength="17.5" lengthAdjust="spacingAndGlyphs" >300</text>
<text x="339" y="417" font-family="Liberation Sans" font-size="12" font-weight="normal" fill="#000" stroke="#000" stroke-width="0.25" text-anchor="start" textLength="17.5" lengthAdjust="spacingAndGlyphs" >400</text>
<text x="370" y="417" font-family="Liberation Sans" font-size="12" font-weight="normal" fill="#000" stroke="#000" stroke-width="0.25" text-anchor="start" textLength="17.5" lengthAdjust="spacingAndGlyphs" >600</text>
<text x="408" y="417" font-family="Liberation Sans" font-size="12" font-weight="normal" fill="#000" stroke="#000" stroke-width="0.25" text-anchor="start" textLength="11" lengthAdjust="spacingAndGlyphs" >1k</text>
<text x="460" y="417" font-family="Liberation Sans" font-size="12" font-weight="normal" fill="#000" stroke="#000" stroke-width="0.25" text-anchor="start" textLength="11" lengthAdjust="spacingAndGlyphs" >2k</text>
<text x="490" y="417" font-family="Liberation Sans" font-size="12" font-weight="normal" fill="#000" stroke="#000" stroke-width="0.25" text-anchor="start" textLength="11" lengthAdjust="spacingAndGlyphs" >3k</text>
<text x="512" y="417" font-family="Liberation Sans" font-size="12" font-weight="normal" fill="#000" stroke="#000" stroke-width="0.25" text-anchor="start" textLength="11" lengthAdjust="spacingAndGlyphs" >4k</text>
<text x="542" y="417" font-family="Liberation Sans" font-size="12" font-weight="normal" fill="#000" stroke="#000" stroke-width="0.25" text-anchor="start" textLength="11" lengthAdjust="spacingAndGlyphs" >6k</text>
<text x="563" y="417" font-family="Liberation Sans" font-size="12" font-weight="normal" fill="#000" stroke="#000" stroke-width="0.25" text-anchor="start" textLength="11" lengthAdjust="spacingAndGlyphs" >8k</text>
<text x="580" y="417" font-family="Liberation Sans" font-size="12" font-weight="normal" fill="#000" stroke="#000" stroke-width="0.25" text-anchor="start" textLength="17" lengthAdjust="spacingAndGlyphs" >10k</text>
<text x="632" y="417" font-family="Liberation Sans" font-size="12" font-weight="normal" fill="#000" stroke="#000" stroke-width="0.25" text-anchor="start" textLength="17" lengthAdjust="spacingAndGlyphs" >20k</text>
<text x="662" y="417" font-family="Liberation Sans" font-size="12" font-weight="normal" fill="#000" stroke="#000" stroke-width="0.25" text-anchor="start" textLength="17" lengthAdjust="spacingAndGlyphs" >30k</text>
<text x="684" y="417" font-family="Liberation Sans" font-size="12" font-weight="normal" fill="#000" stroke="#000" stroke-width="0.25" text-anchor="start" textLength="30" lengthAdjust="spacingAndGlyphs" >40kHz</text>
</g>
<g id="ctrlwin">
<rect x="725" y="0" width="324" height="588" fill="#d0d0d8" />
<rect x="725" y="587" width="324" height="1" fill="#404040" />
<rect x="1048" y="0" width="1" height="588" fill="#404040" />
<rect x="726" y="586" width="322" height="1" fill="#808080" />
<rect x="1047" y="1" width="1" height="586" fill="#808080" />
<rect x="726" y="1" width="321" height="1" fill="#ffffff" />
<rect x="726" y="1" width="1" height="585" fill="#ffffff" />
<rect x="728" y="3" width="318" height="18" fill="url(#gradR)" />
<text x="730" y="16" font-family="Liberation Sans" font-size="11" font-weight="bold" fill="#fff" stroke="#fff" stroke-width="0.2" text-anchor="start" textLength="138" lengthAdjust="spacingAndGlyphs" >Enclosure Design Control</text>
<rect x="1028" y="5" width="16" height="14" fill="#d0d0d8" />
<rect x="1028" y="5" width="15" height="1" fill="#ffffff" />
<rect x="1028" y="5" width="1" height="13" fill="#ffffff" />
<rect x="1028" y="18" width="16" height="1" fill="#404040" />
<rect x="1043" y="5" width="1" height="14" fill="#404040" />
<rect x="1029" y="17" width="14" height="1" fill="#808080" />
<rect x="1042" y="6" width="1" height="12" fill="#808080" />
<rect x="1032" y="8" width="2" height="1" fill="#000" />
<rect x="1038" y="8" width="2" height="1" fill="#000" />
<rect x="1033" y="9" width="2" height="1" fill="#000" />
<rect x="1037" y="9" width="2" height="1" fill="#000" />
<rect x="1034" y="10" width="2" height="1" fill="#000" />
<rect x="1036" y="10" width="2" height="1" fill="#000" />
<rect x="1035" y="11" width="2" height="1" fill="#000" />
<rect x="1035" y="11" width="2" height="1" fill="#000" />
<rect x="1036" y="12" width="2" height="1" fill="#000" />
<rect x="1034" y="12" width="2" height="1" fill="#000" />
<rect x="1037" y="13" width="2" height="1" fill="#000" />
<rect x="1033" y="13" width="2" height="1" fill="#000" />
<rect x="1038" y="14" width="2" height="1" fill="#000" />
<rect x="1032" y="14" width="2" height="1" fill="#000" />
<rect x="729" y="46" width="314" height="1" fill="#ffffff" />
<rect x="729" y="46" width="1" height="529" fill="#ffffff" />
<rect x="729" y="575" width="315" height="1" fill="#404040" />
<rect x="1043" y="46" width="1" height="530" fill="#404040" />
<rect x="730" y="574" width="313" height="1" fill="#808080" />
<rect x="1042" y="47" width="1" height="528" fill="#808080" />
<rect x="729" y="23" width="160" height="24" fill="#d0d0d8" />
<rect x="731" y="23" width="156" height="1" fill="#ffffff" />
<rect x="729" y="25" width="1" height="22" fill="#ffffff" />
<rect x="730" y="24" width="1" height="1" fill="#ffffff" />
<rect x="888" y="25" width="1" height="21" fill="#404040" />
<rect x="887" y="24" width="1" height="22" fill="#808080" />
<rect x="887" y="24" width="1" height="1" fill="#404040" />
<rect x="889" y="25" width="129" height="1" fill="#ffffff" />
<rect x="1019" y="27" width="1" height="19" fill="#404040" />
<rect x="1018" y="26" width="1" height="20" fill="#808080" />
<rect x="1018" y="26" width="1" height="1" fill="#404040" />
<text x="737.5" y="39" font-family="Liberation Sans" font-size="14" font-weight="bold" fill="#000" stroke="#000" stroke-width="0.2" text-anchor="start" textLength="143.5" lengthAdjust="spacingAndGlyphs" >Enclosure Parameters</text>
<text x="892.5" y="41" font-family="Liberation Sans" font-size="14" font-weight="bold" fill="#000" stroke="#000" stroke-width="0.2" text-anchor="start" textLength="121" lengthAdjust="spacingAndGlyphs" >Transfer Functions</text>
<rect x="737" y="59" width="99" height="59" fill="#000" />
<rect x="738" y="60" width="97" height="57" fill="#ffff40" />
<rect x="770" y="64" width="31" height="49" rx="3.5" ry="3.5" fill="#0000c8"/>
<rect x="772" y="66" width="27" height="45" rx="1.5" ry="1.5" fill="#9ec5e0"/>
<path d="M792.5,71.5 L799.8,66.8 L799.8,89.2 L792.5,85.5 Z" fill="#8c8c8c" stroke="#404040" stroke-width="0.8"/>
<path d="M793,78.5 L799.5,78.5" stroke="#606060" stroke-width="1"/>
<rect x="786" y="71" width="7" height="15" fill="#000" />
<rect x="787" y="72" width="5" height="13" rx="1" fill="#0000c8"/>
<rect x="786" y="91" width="14" height="6" fill="#000" />
<rect x="787" y="92" width="13" height="4" fill="#e8e8e8" />
<text x="775" y="109" font-family="Liberation Sans" font-size="12" font-weight="normal" fill="#000" stroke="#000" stroke-width="0.25" text-anchor="start" textLength="22" lengthAdjust="spacingAndGlyphs" >Rear</text>
<text x="743" y="140" font-family="Liberation Serif" font-size="13.5" font-weight="normal" fill="#000" stroke="#000" stroke-width="0.18" text-anchor="start" textLength="101" lengthAdjust="spacingAndGlyphs" >CONFIGURATION</text>
<rect x="736" y="147" width="114" height="34" fill="#a8a8a8" />
<rect x="736" y="147" width="114" height="1" fill="#808080" />
<rect x="736" y="147" width="1" height="34" fill="#808080" />
<rect x="737" y="148" width="112" height="1" fill="#404040" />
<rect x="737" y="148" width="1" height="32" fill="#404040" />
<rect x="736" y="180" width="114" height="1" fill="#ffffff" />
<rect x="849" y="147" width="1" height="34" fill="#ffffff" />
<rect x="737" y="179" width="112" height="1" fill="#d0d0d8" />
<rect x="848" y="148" width="1" height="32" fill="#d0d0d8" />
<rect x="738" y="164" width="94" height="15" fill="#0a246a" />
<text x="740" y="160" font-family="Liberation Serif" font-size="13.5" font-weight="normal" fill="#000" stroke="#000" stroke-width="0.18" text-anchor="start" textLength="68.7" lengthAdjust="spacingAndGlyphs" >Single Driver</text>
<text x="740" y="175" font-family="Liberation Serif" font-size="13.5" font-weight="normal" fill="#fff" stroke="#fff" stroke-width="0.18" text-anchor="start" textLength="90.4" lengthAdjust="spacingAndGlyphs" >2 Drivers-Parallel</text>
<rect x="832" y="149" width="16" height="15" fill="#d0d0d8" />
<rect x="833" y="150" width="13" height="1" fill="#ffffff" />
<rect x="833" y="150" width="1" height="12" fill="#ffffff" />
<rect x="832" y="163" width="16" height="1" fill="#404040" />
<rect x="847" y="149" width="1" height="15" fill="#404040" />
<rect x="833" y="162" width="14" height="1" fill="#808080" />
<rect x="846" y="150" width="1" height="13" fill="#808080" />
<rect x="839" y="154" width="1" height="1" fill="#000" />
<rect x="838" y="155" width="3" height="1" fill="#000" />
<rect x="837" y="156" width="5" height="1" fill="#000" />
<rect x="832" y="164" width="16" height="15" fill="#d0d0d8" />
<rect x="833" y="165" width="13" height="1" fill="#ffffff" />
<rect x="833" y="165" width="1" height="12" fill="#ffffff" />
<rect x="832" y="178" width="16" height="1" fill="#404040" />
<rect x="847" y="164" width="1" height="15" fill="#404040" />
<rect x="833" y="177" width="14" height="1" fill="#808080" />
<rect x="846" y="165" width="1" height="13" fill="#808080" />
<rect x="837" y="171" width="5" height="1" fill="#000" />
<rect x="838" y="172" width="3" height="1" fill="#000" />
<rect x="839" y="173" width="1" height="1" fill="#000" />
<text x="736" y="207" font-family="Liberation Serif" font-size="13.5" font-weight="normal" fill="#000" stroke="#000" stroke-width="0.18" text-anchor="start" textLength="110" lengthAdjust="spacingAndGlyphs" >ENCLOSURE TYPES</text>
<rect x="738" y="215" width="13" height="13" fill="#a8a8a8" />
<rect x="738" y="215" width="13" height="1" fill="#808080" />
<rect x="738" y="215" width="1" height="13" fill="#808080" />
<rect x="739" y="216" width="11" height="1" fill="#404040" />
<rect x="739" y="216" width="1" height="11" fill="#404040" />
<rect x="738" y="227" width="13" height="1" fill="#ffffff" />
<rect x="750" y="215" width="1" height="13" fill="#ffffff" />
<rect x="739" y="226" width="11" height="1" fill="#d0d0d8" />
<rect x="749" y="216" width="1" height="11" fill="#d0d0d8" />
<rect x="741" y="220" width="1" height="3" fill="#000" />
<rect x="742" y="221" width="1" height="3" fill="#000" />
<rect x="743" y="222" width="1" height="3" fill="#000" />
<rect x="744" y="221" width="1" height="3" fill="#000" />
<rect x="745" y="220" width="1" height="3" fill="#000" />
<rect x="746" y="219" width="1" height="3" fill="#000" />
<rect x="747" y="218" width="1" height="3" fill="#000" />
<text x="756" y="226" font-family="Liberation Serif" font-size="13.5" font-weight="normal" fill="#000" stroke="#000" stroke-width="0.18" text-anchor="start" textLength="35.5" lengthAdjust="spacingAndGlyphs" >Sealed</text>
<rect x="738" y="232" width="13" height="13" fill="#a8a8a8" />
<rect x="738" y="232" width="13" height="1" fill="#808080" />
<rect x="738" y="232" width="1" height="13" fill="#808080" />
<rect x="739" y="233" width="11" height="1" fill="#404040" />
<rect x="739" y="233" width="1" height="11" fill="#404040" />
<rect x="738" y="244" width="13" height="1" fill="#ffffff" />
<rect x="750" y="232" width="1" height="13" fill="#ffffff" />
<rect x="739" y="243" width="11" height="1" fill="#d0d0d8" />
<rect x="749" y="233" width="1" height="11" fill="#d0d0d8" />
<rect x="741" y="237" width="1" height="3" fill="#000" />
<rect x="742" y="238" width="1" height="3" fill="#000" />
<rect x="743" y="239" width="1" height="3" fill="#000" />
<rect x="744" y="238" width="1" height="3" fill="#000" />
<rect x="745" y="237" width="1" height="3" fill="#000" />
<rect x="746" y="236" width="1" height="3" fill="#000" />
<rect x="747" y="235" width="1" height="3" fill="#000" />
<text x="756" y="243" font-family="Liberation Serif" font-size="13.5" font-weight="normal" fill="#000" stroke="#000" stroke-width="0.18" text-anchor="start" textLength="38.5" lengthAdjust="spacingAndGlyphs" >Vented</text>
<rect x="738" y="249" width="13" height="13" fill="#a8a8a8" />
<rect x="738" y="249" width="13" height="1" fill="#808080" />
<rect x="738" y="249" width="1" height="13" fill="#808080" />
<rect x="739" y="250" width="11" height="1" fill="#404040" />
<rect x="739" y="250" width="1" height="11" fill="#404040" />
<rect x="738" y="261" width="13" height="1" fill="#ffffff" />
<rect x="750" y="249" width="1" height="13" fill="#ffffff" />
<rect x="739" y="260" width="11" height="1" fill="#d0d0d8" />
<rect x="749" y="250" width="1" height="11" fill="#d0d0d8" />
<text x="756" y="260" font-family="Liberation Serif" font-size="13.5" font-weight="normal" fill="#000" stroke="#000" stroke-width="0.18" text-anchor="start" textLength="89.5" lengthAdjust="spacingAndGlyphs" >Passive Radiator</text>
<rect x="738" y="266" width="13" height="13" fill="#a8a8a8" />
<rect x="738" y="266" width="13" height="1" fill="#808080" />
<rect x="738" y="266" width="1" height="13" fill="#808080" />
<rect x="739" y="267" width="11" height="1" fill="#404040" />
<rect x="739" y="267" width="1" height="11" fill="#404040" />
<rect x="738" y="278" width="13" height="1" fill="#ffffff" />
<rect x="750" y="266" width="1" height="13" fill="#ffffff" />
<rect x="739" y="277" width="11" height="1" fill="#d0d0d8" />
<rect x="749" y="267" width="1" height="11" fill="#d0d0d8" />
<text x="756" y="277" font-family="Liberation Serif" font-size="13.5" font-weight="normal" fill="#000" stroke="#000" stroke-width="0.18" text-anchor="start" textLength="38" lengthAdjust="spacingAndGlyphs" >T- Line</text>
<rect x="738" y="284" width="13" height="13" fill="#a8a8a8" />
<rect x="738" y="284" width="13" height="1" fill="#808080" />
<rect x="738" y="284" width="1" height="13" fill="#808080" />
<rect x="739" y="285" width="11" height="1" fill="#404040" />
<rect x="739" y="285" width="1" height="11" fill="#404040" />
<rect x="738" y="296" width="13" height="1" fill="#ffffff" />
<rect x="750" y="284" width="1" height="13" fill="#ffffff" />
<rect x="739" y="295" width="11" height="1" fill="#d0d0d8" />
<rect x="749" y="285" width="1" height="11" fill="#d0d0d8" />
<text x="756" y="295" font-family="Liberation Serif" font-size="13.5" font-weight="normal" fill="#000" stroke="#000" stroke-width="0.18" text-anchor="start" textLength="77.5" lengthAdjust="spacingAndGlyphs" >T-Line/Vented</text>
<rect x="738" y="303" width="13" height="13" fill="#a8a8a8" />
<rect x="738" y="303" width="13" height="1" fill="#808080" />
<rect x="738" y="303" width="1" height="13" fill="#808080" />
<rect x="739" y="304" width="11" height="1" fill="#404040" />
<rect x="739" y="304" width="1" height="11" fill="#404040" />
<rect x="738" y="315" width="13" height="1" fill="#ffffff" />
<rect x="750" y="303" width="1" height="13" fill="#ffffff" />
<rect x="739" y="314" width="11" height="1" fill="#d0d0d8" />
<rect x="749" y="304" width="1" height="11" fill="#d0d0d8" />
<text x="756" y="314" font-family="Liberation Serif" font-size="13.5" font-weight="normal" fill="#000" stroke="#000" stroke-width="0.18" text-anchor="start" textLength="27.8" lengthAdjust="spacingAndGlyphs" >Horn</text>
<rect x="738" y="322" width="13" height="13" fill="#a8a8a8" />
<rect x="738" y="322" width="13" height="1" fill="#808080" />
<rect x="738" y="322" width="1" height="13" fill="#808080" />
<rect x="739" y="323" width="11" height="1" fill="#404040" />
<rect x="739" y="323" width="1" height="11" fill="#404040" />
<rect x="738" y="334" width="13" height="1" fill="#ffffff" />
<rect x="750" y="322" width="1" height="13" fill="#ffffff" />
<rect x="739" y="333" width="11" height="1" fill="#d0d0d8" />
<rect x="749" y="323" width="1" height="11" fill="#d0d0d8" />
<text x="756" y="333" font-family="Liberation Serif" font-size="13.5" font-weight="normal" fill="#000" stroke="#000" stroke-width="0.18" text-anchor="start" textLength="23.2" lengthAdjust="spacingAndGlyphs" >BP 1</text>
<rect x="738" y="341" width="13" height="13" fill="#a8a8a8" />
<rect x="738" y="341" width="13" height="1" fill="#808080" />
<rect x="738" y="341" width="1" height="13" fill="#808080" />
<rect x="739" y="342" width="11" height="1" fill="#404040" />
<rect x="739" y="342" width="1" height="11" fill="#404040" />
<rect x="738" y="353" width="13" height="1" fill="#ffffff" />
<rect x="750" y="341" width="1" height="13" fill="#ffffff" />
<rect x="739" y="352" width="11" height="1" fill="#d0d0d8" />
<rect x="749" y="342" width="1" height="11" fill="#d0d0d8" />
<text x="756" y="352" font-family="Liberation Serif" font-size="13.5" font-weight="normal" fill="#000" stroke="#000" stroke-width="0.18" text-anchor="start" textLength="24" lengthAdjust="spacingAndGlyphs" >BP 2</text>
<rect x="738" y="359" width="13" height="13" fill="#a8a8a8" />
<rect x="738" y="359" width="13" height="1" fill="#808080" />
<rect x="738" y="359" width="1" height="13" fill="#808080" />
<rect x="739" y="360" width="11" height="1" fill="#404040" />
<rect x="739" y="360" width="1" height="11" fill="#404040" />
<rect x="738" y="371" width="13" height="1" fill="#ffffff" />
<rect x="750" y="359" width="1" height="13" fill="#ffffff" />
<rect x="739" y="370" width="11" height="1" fill="#d0d0d8" />
<rect x="749" y="360" width="1" height="11" fill="#d0d0d8" />
<text x="756" y="370" font-family="Liberation Serif" font-size="13.5" font-weight="normal" fill="#000" stroke="#000" stroke-width="0.18" text-anchor="start" textLength="24" lengthAdjust="spacingAndGlyphs" >BP 3</text>
<rect x="738" y="376" width="13" height="13" fill="#a8a8a8" />
<rect x="738" y="376" width="13" height="1" fill="#808080" />
<rect x="738" y="376" width="1" height="13" fill="#808080" />
<rect x="739" y="377" width="11" height="1" fill="#404040" />
<rect x="739" y="377" width="1" height="11" fill="#404040" />
<rect x="738" y="388" width="13" height="1" fill="#ffffff" />
<rect x="750" y="376" width="1" height="13" fill="#ffffff" />
<rect x="739" y="387" width="11" height="1" fill="#d0d0d8" />
<rect x="749" y="377" width="1" height="11" fill="#d0d0d8" />
<text x="756" y="387" font-family="Liberation Serif" font-size="13.5" font-weight="normal" fill="#000" stroke="#000" stroke-width="0.18" text-anchor="start" textLength="24" lengthAdjust="spacingAndGlyphs" >BP 4</text>
<rect x="738" y="393" width="13" height="13" fill="#a8a8a8" />
<rect x="738" y="393" width="13" height="1" fill="#808080" />
<rect x="738" y="393" width="1" height="13" fill="#808080" />
<rect x="739" y="394" width="11" height="1" fill="#404040" />
<rect x="739" y="394" width="1" height="11" fill="#404040" />
<rect x="738" y="405" width="13" height="1" fill="#ffffff" />
<rect x="750" y="393" width="1" height="13" fill="#ffffff" />
<rect x="739" y="404" width="11" height="1" fill="#d0d0d8" />
<rect x="749" y="394" width="1" height="11" fill="#d0d0d8" />
<text x="756" y="404" font-family="Liberation Serif" font-size="13.5" font-weight="normal" fill="#000" stroke="#000" stroke-width="0.18" text-anchor="start" textLength="24" lengthAdjust="spacingAndGlyphs" >BP 5</text>
<rect x="738" y="410" width="13" height="13" fill="#a8a8a8" />
<rect x="738" y="410" width="13" height="1" fill="#808080" />
<rect x="738" y="410" width="1" height="13" fill="#808080" />
<rect x="739" y="411" width="11" height="1" fill="#404040" />
<rect x="739" y="411" width="1" height="11" fill="#404040" />
<rect x="738" y="422" width="13" height="1" fill="#ffffff" />
<rect x="750" y="410" width="1" height="13" fill="#ffffff" />
<rect x="739" y="421" width="11" height="1" fill="#d0d0d8" />
<rect x="749" y="411" width="1" height="11" fill="#d0d0d8" />
<text x="756" y="421" font-family="Liberation Serif" font-size="13.5" font-weight="normal" fill="#000" stroke="#000" stroke-width="0.18" text-anchor="start" textLength="48.2" lengthAdjust="spacingAndGlyphs" >U-Dipole</text>
<rect x="738" y="427" width="13" height="13" fill="#a8a8a8" />
<rect x="738" y="427" width="13" height="1" fill="#808080" />
<rect x="738" y="427" width="1" height="13" fill="#808080" />
<rect x="739" y="428" width="11" height="1" fill="#404040" />
<rect x="739" y="428" width="1" height="11" fill="#404040" />
<rect x="738" y="439" width="13" height="1" fill="#ffffff" />
<rect x="750" y="427" width="1" height="13" fill="#ffffff" />
<rect x="739" y="438" width="11" height="1" fill="#d0d0d8" />
<rect x="749" y="428" width="1" height="11" fill="#d0d0d8" />
<text x="756" y="438" font-family="Liberation Serif" font-size="13.5" font-weight="normal" fill="#000" stroke="#000" stroke-width="0.18" text-anchor="start" textLength="48.2" lengthAdjust="spacingAndGlyphs" >H-Dipole</text>
<rect x="738" y="444" width="13" height="13" fill="#a8a8a8" />
<rect x="738" y="444" width="13" height="1" fill="#808080" />
<rect x="738" y="444" width="1" height="13" fill="#808080" />
<rect x="739" y="445" width="11" height="1" fill="#404040" />
<rect x="739" y="445" width="1" height="11" fill="#404040" />
<rect x="738" y="456" width="13" height="1" fill="#ffffff" />
<rect x="750" y="444" width="1" height="13" fill="#ffffff" />
<rect x="739" y="455" width="11" height="1" fill="#d0d0d8" />
<rect x="749" y="445" width="1" height="11" fill="#d0d0d8" />
<text x="756" y="455" font-family="Liberation Serif" font-size="13.5" font-weight="normal" fill="#000" stroke="#000" stroke-width="0.18" text-anchor="start" textLength="42.8" lengthAdjust="spacingAndGlyphs" >Isobaric</text>
<rect x="738" y="463" width="13" height="13" fill="#a8a8a8" />
<rect x="738" y="463" width="13" height="1" fill="#808080" />
<rect x="738" y="463" width="1" height="13" fill="#808080" />
<rect x="739" y="464" width="11" height="1" fill="#404040" />
<rect x="739" y="464" width="1" height="11" fill="#404040" />
<rect x="738" y="475" width="13" height="1" fill="#ffffff" />
<rect x="750" y="463" width="1" height="13" fill="#ffffff" />
<rect x="739" y="474" width="11" height="1" fill="#d0d0d8" />
<rect x="749" y="464" width="1" height="11" fill="#d0d0d8" />
<rect x="741" y="468" width="1" height="3" fill="#000" />
<rect x="742" y="469" width="1" height="3" fill="#000" />
<rect x="743" y="470" width="1" height="3" fill="#000" />
<rect x="744" y="469" width="1" height="3" fill="#000" />
<rect x="745" y="468" width="1" height="3" fill="#000" />
<rect x="746" y="467" width="1" height="3" fill="#000" />
<rect x="747" y="466" width="1" height="3" fill="#000" />
<text x="756" y="474" font-family="Liberation Serif" font-size="13.5" font-weight="normal" fill="#000" stroke="#000" stroke-width="0.18" text-anchor="start" textLength="48.7" lengthAdjust="spacingAndGlyphs" >Standard</text>
<rect x="738" y="481" width="13" height="13" fill="#a8a8a8" />
<rect x="738" y="481" width="13" height="1" fill="#808080" />
<rect x="738" y="481" width="1" height="13" fill="#808080" />
<rect x="739" y="482" width="11" height="1" fill="#404040" />
<rect x="739" y="482" width="1" height="11" fill="#404040" />
<rect x="738" y="493" width="13" height="1" fill="#ffffff" />
<rect x="750" y="481" width="1" height="13" fill="#ffffff" />
<rect x="739" y="492" width="11" height="1" fill="#d0d0d8" />
<rect x="749" y="482" width="1" height="11" fill="#d0d0d8" />
<text x="756" y="492" font-family="Liberation Serif" font-size="13.5" font-weight="normal" fill="#000" stroke="#000" stroke-width="0.18" text-anchor="start" textLength="108" lengthAdjust="spacingAndGlyphs" >FEM for Box Modes</text>
<rect x="738" y="500" width="13" height="13" fill="#a8a8a8" />
<rect x="738" y="500" width="13" height="1" fill="#808080" />
<rect x="738" y="500" width="1" height="13" fill="#808080" />
<rect x="739" y="501" width="11" height="1" fill="#404040" />
<rect x="739" y="501" width="1" height="11" fill="#404040" />
<rect x="738" y="512" width="13" height="1" fill="#ffffff" />
<rect x="750" y="500" width="1" height="13" fill="#ffffff" />
<rect x="739" y="511" width="11" height="1" fill="#d0d0d8" />
<rect x="749" y="501" width="1" height="11" fill="#d0d0d8" />
<text x="756" y="511" font-family="Liberation Serif" font-size="13.5" font-weight="normal" fill="#000" stroke="#000" stroke-width="0.18" text-anchor="start" textLength="129" lengthAdjust="spacingAndGlyphs" >Enable Port Resonances</text>
<rect x="738" y="525" width="44" height="17" fill="#000" />
<rect x="739" y="526" width="42" height="15" fill="#d0d0d8" />
<rect x="739" y="526" width="41" height="1" fill="#ffffff" />
<rect x="739" y="526" width="1" height="14" fill="#ffffff" />
<rect x="739" y="540" width="42" height="1" fill="#404040" />
<rect x="780" y="526" width="1" height="15" fill="#404040" />
<rect x="740" y="539" width="40" height="1" fill="#808080" />
<rect x="779" y="527" width="1" height="13" fill="#808080" />
<text x="759.5" y="537" font-family="Liberation Serif" font-size="13.5" font-weight="normal" fill="#000" stroke="#000" stroke-width="0.18" text-anchor="middle" textLength="27.7" lengthAdjust="spacingAndGlyphs" >Scale</text>
<rect x="787" y="525" width="44" height="17" fill="#000" />
<rect x="788" y="526" width="42" height="15" fill="#d0d0d8" />
<rect x="788" y="526" width="41" height="1" fill="#ffffff" />
<rect x="788" y="526" width="1" height="14" fill="#ffffff" />
<rect x="788" y="540" width="42" height="1" fill="#404040" />
<rect x="829" y="526" width="1" height="15" fill="#404040" />
<rect x="789" y="539" width="40" height="1" fill="#808080" />
<rect x="828" y="527" width="1" height="13" fill="#808080" />
<text x="808.5" y="537" font-family="Liberation Serif" font-size="13.5" font-weight="normal" fill="#000" stroke="#000" stroke-width="0.18" text-anchor="middle" textLength="24.2" lengthAdjust="spacingAndGlyphs" >New</text>
<rect x="738" y="548" width="44" height="17" fill="#000" />
<rect x="739" y="549" width="42" height="15" fill="#d0d0d8" />
<rect x="739" y="549" width="41" height="1" fill="#ffffff" />
<rect x="739" y="549" width="1" height="14" fill="#ffffff" />
<rect x="739" y="563" width="42" height="1" fill="#404040" />
<rect x="780" y="549" width="1" height="15" fill="#404040" />
<rect x="740" y="562" width="40" height="1" fill="#808080" />
<rect x="779" y="550" width="1" height="13" fill="#808080" />
<text x="759.5" y="560" font-family="Liberation Serif" font-size="13.5" font-weight="normal" fill="#000" stroke="#000" stroke-width="0.18" text-anchor="middle" textLength="27.7" lengthAdjust="spacingAndGlyphs" >Clear</text>
<rect x="787" y="548" width="44" height="17" fill="#000" />
<rect x="788" y="549" width="42" height="15" fill="#d0d0d8" />
<rect x="788" y="549" width="41" height="1" fill="#ffffff" />
<rect x="788" y="549" width="1" height="14" fill="#ffffff" />
<rect x="788" y="563" width="42" height="1" fill="#404040" />
<rect x="829" y="549" width="1" height="15" fill="#404040" />
<rect x="789" y="562" width="40" height="1" fill="#808080" />
<rect x="828" y="550" width="1" height="13" fill="#808080" />
<text x="808.5" y="560" font-family="Liberation Serif" font-size="13.5" font-weight="normal" fill="#000" stroke="#000" stroke-width="0.18" text-anchor="middle" textLength="24.9" lengthAdjust="spacingAndGlyphs" >Print</text>
<text x="864" y="63" font-family="Liberation Serif" font-size="13.5" font-weight="normal" fill="#000" stroke="#000" stroke-width="0.18" text-anchor="start" textLength="158" lengthAdjust="spacingAndGlyphs" >ENCLOSURE PARAMETERS</text>
<rect x="946" y="68" width="56" height="20" fill="#a8a8a8" />
<rect x="946" y="68" width="56" height="1" fill="#808080" />
<rect x="946" y="68" width="1" height="20" fill="#808080" />
<rect x="947" y="69" width="54" height="1" fill="#404040" />
<rect x="947" y="69" width="1" height="18" fill="#404040" />
<rect x="946" y="87" width="56" height="1" fill="#ffffff" />
<rect x="1001" y="68" width="1" height="20" fill="#ffffff" />
<rect x="947" y="86" width="54" height="1" fill="#d0d0d8" />
<rect x="1000" y="69" width="1" height="18" fill="#d0d0d8" />
<text x="952" y="83" font-family="Liberation Serif" font-size="13.5" font-weight="normal" fill="#000" stroke="#000" stroke-width="0.18" text-anchor="start" textLength="6.4" lengthAdjust="spacingAndGlyphs" >6</text>
<text x="875" y="82" font-family="Liberation Serif" font-size="13.5" font-weight="normal" fill="#000" stroke="#000" stroke-width="0.18" text-anchor="start" textLength="65.5" lengthAdjust="spacingAndGlyphs" >Rear Box Vb</text>
<text x="1006" y="84" font-family="Liberation Serif" font-size="13.5" font-weight="normal" fill="#000" stroke="#000" stroke-width="0.18" text-anchor="start" textLength="11.2" lengthAdjust="spacingAndGlyphs" >Lt</text>
<rect x="946" y="89" width="56" height="20" fill="#a8a8a8" />
<rect x="946" y="89" width="56" height="1" fill="#808080" />
<rect x="946" y="89" width="1" height="20" fill="#808080" />
<rect x="947" y="90" width="54" height="1" fill="#404040" />
<rect x="947" y="90" width="1" height="18" fill="#404040" />
<rect x="946" y="108" width="56" height="1" fill="#ffffff" />
<rect x="1001" y="89" width="1" height="20" fill="#ffffff" />
<rect x="947" y="107" width="54" height="1" fill="#d0d0d8" />
<rect x="1000" y="90" width="1" height="18" fill="#d0d0d8" />
<text x="952" y="103" font-family="Liberation Serif" font-size="13.5" font-weight="normal" fill="#000" stroke="#000" stroke-width="0.18" text-anchor="start" textLength="12.5" lengthAdjust="spacingAndGlyphs" >65</text>
<text x="876" y="102" font-family="Liberation Serif" font-size="13.5" font-weight="normal" fill="#000" stroke="#000" stroke-width="0.18" text-anchor="start" textLength="64.5" lengthAdjust="spacingAndGlyphs" >Rear Box Fb</text>
<text x="1006" y="104" font-family="Liberation Serif" font-size="13.5" font-weight="normal" fill="#000" stroke="#000" stroke-width="0.18" text-anchor="start" textLength="15" lengthAdjust="spacingAndGlyphs" >Hz</text>
<rect x="946" y="110" width="56" height="20" fill="#a8a8a8" />
<rect x="946" y="110" width="56" height="1" fill="#808080" />
<rect x="946" y="110" width="1" height="20" fill="#808080" />
<rect x="947" y="111" width="54" height="1" fill="#404040" />
<rect x="947" y="111" width="1" height="18" fill="#404040" />
<rect x="946" y="129" width="56" height="1" fill="#ffffff" />
<rect x="1001" y="110" width="1" height="20" fill="#ffffff" />
<rect x="947" y="128" width="54" height="1" fill="#d0d0d8" />
<rect x="1000" y="111" width="1" height="18" fill="#d0d0d8" />
<text x="952" y="124" font-family="Liberation Serif" font-size="13.5" font-weight="normal" fill="#000" stroke="#000" stroke-width="0.18" text-anchor="start" textLength="21.5" lengthAdjust="spacingAndGlyphs" >10.0</text>
<text x="876" y="125" font-family="Liberation Serif" font-size="13.5" font-weight="normal" fill="#000" stroke="#000" stroke-width="0.18" text-anchor="start" textLength="66" lengthAdjust="spacingAndGlyphs" >Rear Box Qb</text>
<rect x="946" y="130" width="56" height="20" fill="#d0d0d8" />
<rect x="946" y="130" width="56" height="1" fill="#808080" />
<rect x="946" y="130" width="1" height="20" fill="#808080" />
<rect x="947" y="131" width="54" height="1" fill="#404040" />
<rect x="947" y="131" width="1" height="18" fill="#404040" />
<rect x="946" y="149" width="56" height="1" fill="#ffffff" />
<rect x="1001" y="130" width="1" height="20" fill="#ffffff" />
<rect x="947" y="148" width="54" height="1" fill="#d0d0d8" />
<rect x="1000" y="131" width="1" height="18" fill="#d0d0d8" />
<text x="952" y="144" font-family="Liberation Serif" font-size="13.5" font-weight="normal" fill="#808080" stroke="#808080" stroke-width="0.18" text-anchor="start" textLength="15.3" lengthAdjust="spacingAndGlyphs" >0.0</text>
<text x="873" y="145" font-family="Liberation Serif" font-size="13.5" font-weight="normal" fill="#000" stroke="#000" stroke-width="0.18" text-anchor="start" textLength="69.8" lengthAdjust="spacingAndGlyphs" >Front Box Vb</text>
<text x="1008" y="144" font-family="Liberation Serif" font-size="13.5" font-weight="normal" fill="#000" stroke="#000" stroke-width="0.18" text-anchor="start" textLength="11.2" lengthAdjust="spacingAndGlyphs" >Lt</text>
<rect x="946" y="151" width="56" height="20" fill="#d0d0d8" />
<rect x="946" y="151" width="56" height="1" fill="#808080" />
<rect x="946" y="151" width="1" height="20" fill="#808080" />
<rect x="947" y="152" width="54" height="1" fill="#404040" />
<rect x="947" y="152" width="1" height="18" fill="#404040" />
<rect x="946" y="170" width="56" height="1" fill="#ffffff" />
<rect x="1001" y="151" width="1" height="20" fill="#ffffff" />
<rect x="947" y="169" width="54" height="1" fill="#d0d0d8" />
<rect x="1000" y="152" width="1" height="18" fill="#d0d0d8" />
<text x="952" y="165" font-family="Liberation Serif" font-size="13.5" font-weight="normal" fill="#808080" stroke="#808080" stroke-width="0.18" text-anchor="start" textLength="15.3" lengthAdjust="spacingAndGlyphs" >0.0</text>
<text x="873" y="166" font-family="Liberation Serif" font-size="13.5" font-weight="normal" fill="#000" stroke="#000" stroke-width="0.18" text-anchor="start" textLength="69.2" lengthAdjust="spacingAndGlyphs" >Front Box Fb</text>
<text x="1008" y="165" font-family="Liberation Serif" font-size="13.5" font-weight="normal" fill="#000" stroke="#000" stroke-width="0.18" text-anchor="start" textLength="15" lengthAdjust="spacingAndGlyphs" >Hz</text>
<rect x="946" y="172" width="56" height="20" fill="#d0d0d8" />
<rect x="946" y="172" width="56" height="1" fill="#808080" />
<rect x="946" y="172" width="1" height="20" fill="#808080" />
<rect x="947" y="173" width="54" height="1" fill="#404040" />
<rect x="947" y="173" width="1" height="18" fill="#404040" />
<rect x="946" y="191" width="56" height="1" fill="#ffffff" />
<rect x="1001" y="172" width="1" height="20" fill="#ffffff" />
<rect x="947" y="190" width="54" height="1" fill="#d0d0d8" />
<rect x="1000" y="173" width="1" height="18" fill="#d0d0d8" />
<text x="952" y="186" font-family="Liberation Serif" font-size="13.5" font-weight="normal" fill="#808080" stroke="#808080" stroke-width="0.18" text-anchor="start" textLength="15.3" lengthAdjust="spacingAndGlyphs" >0.0</text>
<text x="873" y="187" font-family="Liberation Serif" font-size="13.5" font-weight="normal" fill="#000" stroke="#000" stroke-width="0.18" text-anchor="start" textLength="70.6" lengthAdjust="spacingAndGlyphs" >Front Box Qb</text>
<text x="864" y="207" font-family="Liberation Serif" font-size="13.5" font-weight="normal" fill="#000" stroke="#000" stroke-width="0.18" text-anchor="start" textLength="160.5" lengthAdjust="spacingAndGlyphs" >PASSIVE RADIATOR / PORT</text>
<rect x="946" y="214" width="56" height="20" fill="#d0d0d8" />
<rect x="946" y="214" width="56" height="1" fill="#808080" />
<rect x="946" y="214" width="1" height="20" fill="#808080" />
<rect x="947" y="215" width="54" height="1" fill="#404040" />
<rect x="947" y="215" width="1" height="18" fill="#404040" />
<rect x="946" y="233" width="56" height="1" fill="#ffffff" />
<rect x="1001" y="214" width="1" height="20" fill="#ffffff" />
<rect x="947" y="232" width="54" height="1" fill="#d0d0d8" />
<rect x="1000" y="215" width="1" height="18" fill="#d0d0d8" />
<text x="952" y="229" font-family="Liberation Serif" font-size="13.5" font-weight="normal" fill="#808080" stroke="#808080" stroke-width="0.18" text-anchor="start" textLength="15.3" lengthAdjust="spacingAndGlyphs" >0.0</text>
<text x="873" y="228" font-family="Liberation Serif" font-size="13.5" font-weight="normal" fill="#000" stroke="#000" stroke-width="0.18" text-anchor="start" textLength="69.2" lengthAdjust="spacingAndGlyphs" >Radiator Vap</text>
<text x="1008" y="230" font-family="Liberation Serif" font-size="13.5" font-weight="normal" fill="#000" stroke="#000" stroke-width="0.18" text-anchor="start" textLength="11.2" lengthAdjust="spacingAndGlyphs" >Lt</text>
<rect x="946" y="235" width="56" height="20" fill="#d0d0d8" />
<rect x="946" y="235" width="56" height="1" fill="#808080" />
<rect x="946" y="235" width="1" height="20" fill="#808080" />
<rect x="947" y="236" width="54" height="1" fill="#404040" />
<rect x="947" y="236" width="1" height="18" fill="#404040" />
<rect x="946" y="254" width="56" height="1" fill="#ffffff" />
<rect x="1001" y="235" width="1" height="20" fill="#ffffff" />
<rect x="947" y="253" width="54" height="1" fill="#d0d0d8" />
<rect x="1000" y="236" width="1" height="18" fill="#d0d0d8" />
<text x="952" y="250" font-family="Liberation Serif" font-size="13.5" font-weight="normal" fill="#808080" stroke="#808080" stroke-width="0.18" text-anchor="start" textLength="15.3" lengthAdjust="spacingAndGlyphs" >0.0</text>
<text x="873" y="248" font-family="Liberation Serif" font-size="13.5" font-weight="normal" fill="#000" stroke="#000" stroke-width="0.18" text-anchor="start" textLength="62.5" lengthAdjust="spacingAndGlyphs" >Radiator Fp</text>
<text x="1008" y="250" font-family="Liberation Serif" font-size="13.5" font-weight="normal" fill="#000" stroke="#000" stroke-width="0.18" text-anchor="start" textLength="15" lengthAdjust="spacingAndGlyphs" >Hz</text>
<rect x="946" y="256" width="56" height="20" fill="#a8a8a8" />
<rect x="946" y="256" width="56" height="1" fill="#808080" />
<rect x="946" y="256" width="1" height="20" fill="#808080" />
<rect x="947" y="257" width="54" height="1" fill="#404040" />
<rect x="947" y="257" width="1" height="18" fill="#404040" />
<rect x="946" y="275" width="56" height="1" fill="#ffffff" />
<rect x="1001" y="256" width="1" height="20" fill="#ffffff" />
<rect x="947" y="274" width="54" height="1" fill="#d0d0d8" />
<rect x="1000" y="257" width="1" height="18" fill="#d0d0d8" />
<text x="952" y="270" font-family="Liberation Serif" font-size="13.5" font-weight="normal" fill="#000" stroke="#000" stroke-width="0.18" text-anchor="start" textLength="21.5" lengthAdjust="spacingAndGlyphs" >30.0</text>
<text x="873" y="270" font-family="Liberation Serif" font-size="13.5" font-weight="normal" fill="#000" stroke="#000" stroke-width="0.18" text-anchor="start" textLength="60.8" lengthAdjust="spacingAndGlyphs" >PR/Port Qp</text>
<rect x="946" y="277" width="56" height="20" fill="#d0d0d8" />
<rect x="946" y="277" width="56" height="1" fill="#808080" />
<rect x="946" y="277" width="1" height="20" fill="#808080" />
<rect x="947" y="278" width="54" height="1" fill="#404040" />
<rect x="947" y="278" width="1" height="18" fill="#404040" />
<rect x="946" y="296" width="56" height="1" fill="#ffffff" />
<rect x="1001" y="277" width="1" height="20" fill="#ffffff" />
<rect x="947" y="295" width="54" height="1" fill="#d0d0d8" />
<rect x="1000" y="278" width="1" height="18" fill="#d0d0d8" />
<text x="952" y="291" font-family="Liberation Serif" font-size="13.5" font-weight="normal" fill="#808080" stroke="#808080" stroke-width="0.18" text-anchor="start" textLength="15.3" lengthAdjust="spacingAndGlyphs" >0.0</text>
<text x="873" y="290" font-family="Liberation Serif" font-size="13.5" font-weight="normal" fill="#000" stroke="#000" stroke-width="0.18" text-anchor="start" textLength="65.4" lengthAdjust="spacingAndGlyphs" >PR Diameter</text>
<text x="1007" y="290" font-family="Liberation Serif" font-size="13.5" font-weight="normal" fill="#000" stroke="#000" stroke-width="0.18" text-anchor="start" textLength="15.5" lengthAdjust="spacingAndGlyphs" >cm</text>
<rect x="946" y="298" width="56" height="20" fill="#a8a8a8" />
<rect x="946" y="298" width="56" height="1" fill="#808080" />
<rect x="946" y="298" width="1" height="20" fill="#808080" />
<rect x="947" y="299" width="54" height="1" fill="#404040" />
<rect x="947" y="299" width="1" height="18" fill="#404040" />
<rect x="946" y="317" width="56" height="1" fill="#ffffff" />
<rect x="1001" y="298" width="1" height="20" fill="#ffffff" />
<rect x="947" y="316" width="54" height="1" fill="#d0d0d8" />
<rect x="1000" y="299" width="1" height="18" fill="#d0d0d8" />
<text x="952" y="312" font-family="Liberation Serif" font-size="13.5" font-weight="normal" fill="#000" stroke="#000" stroke-width="0.18" text-anchor="start" textLength="27.5" lengthAdjust="spacingAndGlyphs" >100.0</text>
<text x="868" y="311" font-family="Liberation Serif" font-size="13.5" font-weight="normal" fill="#000" stroke="#000" stroke-width="0.18" text-anchor="start" textLength="72.7" lengthAdjust="spacingAndGlyphs" >Port Diameter</text>
<text x="1006" y="310" font-family="Liberation Serif" font-size="13.5" font-weight="normal" fill="#000" stroke="#000" stroke-width="0.18" text-anchor="start" textLength="19.5" lengthAdjust="spacingAndGlyphs" >mm</text>
<text x="862" y="333" font-family="Liberation Serif" font-size="13.5" font-weight="normal" fill="#000" stroke="#000" stroke-width="0.18" text-anchor="start" textLength="169" lengthAdjust="spacingAndGlyphs" >TRANSMISSION-LINE / HORN</text>
<rect x="946" y="339" width="56" height="20" fill="#d0d0d8" />
<rect x="946" y="339" width="56" height="1" fill="#808080" />
<rect x="946" y="339" width="1" height="20" fill="#808080" />
<rect x="947" y="340" width="54" height="1" fill="#404040" />
<rect x="947" y="340" width="1" height="18" fill="#404040" />
<rect x="946" y="358" width="56" height="1" fill="#ffffff" />
<rect x="1001" y="339" width="1" height="20" fill="#ffffff" />
<rect x="947" y="357" width="54" height="1" fill="#d0d0d8" />
<rect x="1000" y="340" width="1" height="18" fill="#d0d0d8" />
<text x="952" y="353" font-family="Liberation Serif" font-size="13.5" font-weight="normal" fill="#808080" stroke="#808080" stroke-width="0.18" text-anchor="start" textLength="15.3" lengthAdjust="spacingAndGlyphs" >0.0</text>
<text x="871.5" y="354" font-family="Liberation Serif" font-size="13.5" font-weight="normal" fill="#000" stroke="#000" stroke-width="0.18" text-anchor="start" textLength="69" lengthAdjust="spacingAndGlyphs" >TL/H Length</text>
<text x="1008" y="354" font-family="Liberation Serif" font-size="13.5" font-weight="normal" fill="#000" stroke="#000" stroke-width="0.18" text-anchor="start" textLength="9.8" lengthAdjust="spacingAndGlyphs" >m</text>
<rect x="946" y="360" width="56" height="20" fill="#d0d0d8" />
<rect x="946" y="360" width="56" height="1" fill="#808080" />
<rect x="946" y="360" width="1" height="20" fill="#808080" />
<rect x="947" y="361" width="54" height="1" fill="#404040" />
<rect x="947" y="361" width="1" height="18" fill="#404040" />
<rect x="946" y="379" width="56" height="1" fill="#ffffff" />
<rect x="1001" y="360" width="1" height="20" fill="#ffffff" />
<rect x="947" y="378" width="54" height="1" fill="#d0d0d8" />
<rect x="1000" y="361" width="1" height="18" fill="#d0d0d8" />
<text x="952" y="374" font-family="Liberation Serif" font-size="13.5" font-weight="normal" fill="#808080" stroke="#808080" stroke-width="0.18" text-anchor="start" textLength="15.3" lengthAdjust="spacingAndGlyphs" >0.0</text>
<text x="862.6" y="374" font-family="Liberation Serif" font-size="13.5" font-weight="normal" fill="#000" stroke="#000" stroke-width="0.18" text-anchor="start" textLength="73.8" lengthAdjust="spacingAndGlyphs" >TL/H Stuffing</text>
<text x="1006" y="376" font-family="Liberation Serif" font-size="13.5" font-weight="normal" fill="#000" stroke="#000" stroke-width="0.18" text-anchor="start" textLength="31.8" lengthAdjust="spacingAndGlyphs" >kg/m3</text>
<rect x="946" y="381" width="56" height="20" fill="#d0d0d8" />
<rect x="946" y="381" width="56" height="1" fill="#808080" />
<rect x="946" y="381" width="1" height="20" fill="#808080" />
<rect x="947" y="382" width="54" height="1" fill="#404040" />
<rect x="947" y="382" width="1" height="18" fill="#404040" />
<rect x="946" y="400" width="56" height="1" fill="#ffffff" />
<rect x="1001" y="381" width="1" height="20" fill="#ffffff" />
<rect x="947" y="399" width="54" height="1" fill="#d0d0d8" />
<rect x="1000" y="382" width="1" height="18" fill="#d0d0d8" />
<text x="952" y="396" font-family="Liberation Serif" font-size="13.5" font-weight="normal" fill="#808080" stroke="#808080" stroke-width="0.18" text-anchor="start" textLength="15.3" lengthAdjust="spacingAndGlyphs" >0.0</text>
<text x="885.2" y="395" font-family="Liberation Serif" font-size="13.5" font-weight="normal" fill="#000" stroke="#000" stroke-width="0.18" text-anchor="start" textLength="49" lengthAdjust="spacingAndGlyphs" >TL Taper</text>
<text x="1006" y="397" font-family="Liberation Serif" font-size="13.5" font-weight="normal" fill="#000" stroke="#000" stroke-width="0.18" text-anchor="start" textLength="20.5" lengthAdjust="spacingAndGlyphs" >T/D</text>
<rect x="946" y="402" width="56" height="20" fill="#d0d0d8" />
<rect x="946" y="402" width="56" height="1" fill="#808080" />
<rect x="946" y="402" width="1" height="20" fill="#808080" />
<rect x="947" y="403" width="54" height="1" fill="#404040" />
<rect x="947" y="403" width="1" height="18" fill="#404040" />
<rect x="946" y="421" width="56" height="1" fill="#ffffff" />
<rect x="1001" y="402" width="1" height="20" fill="#ffffff" />
<rect x="947" y="420" width="54" height="1" fill="#d0d0d8" />
<rect x="1000" y="403" width="1" height="18" fill="#d0d0d8" />
<text x="952" y="417" font-family="Liberation Serif" font-size="13.5" font-weight="normal" fill="#808080" stroke="#808080" stroke-width="0.18" text-anchor="start" textLength="15.3" lengthAdjust="spacingAndGlyphs" >0.0</text>
<text x="875" y="416" font-family="Liberation Serif" font-size="13.5" font-weight="normal" fill="#000" stroke="#000" stroke-width="0.18" text-anchor="start" textLength="61.5" lengthAdjust="spacingAndGlyphs" >Flare Const</text>
<text x="1006.5" y="417" font-family="Liberation Serif" font-size="13.5" font-weight="normal" fill="#000" stroke="#000" stroke-width="0.18" text-anchor="start" textLength="17.5" lengthAdjust="spacingAndGlyphs" >1/m</text>
<rect x="946" y="423" width="56" height="20" fill="#d0d0d8" />
<rect x="946" y="423" width="56" height="1" fill="#808080" />
<rect x="946" y="423" width="1" height="20" fill="#808080" />
<rect x="947" y="424" width="54" height="1" fill="#404040" />
<rect x="947" y="424" width="1" height="18" fill="#404040" />
<rect x="946" y="442" width="56" height="1" fill="#ffffff" />
<rect x="1001" y="423" width="1" height="20" fill="#ffffff" />
<rect x="947" y="441" width="54" height="1" fill="#d0d0d8" />
<rect x="1000" y="424" width="1" height="18" fill="#d0d0d8" />
<text x="952" y="437" font-family="Liberation Serif" font-size="13.5" font-weight="normal" fill="#808080" stroke="#808080" stroke-width="0.18" text-anchor="start" textLength="15.3" lengthAdjust="spacingAndGlyphs" >0.0</text>
<text x="878" y="438" font-family="Liberation Serif" font-size="13.5" font-weight="normal" fill="#000" stroke="#000" stroke-width="0.18" text-anchor="start" textLength="59.5" lengthAdjust="spacingAndGlyphs" >Horn St/Sd</text>
<rect x="946" y="444" width="56" height="20" fill="#d0d0d8" />
<rect x="946" y="444" width="56" height="1" fill="#808080" />
<rect x="946" y="444" width="1" height="20" fill="#808080" />
<rect x="947" y="445" width="54" height="1" fill="#404040" />
<rect x="947" y="445" width="1" height="18" fill="#404040" />
<rect x="946" y="463" width="56" height="1" fill="#ffffff" />
<rect x="1001" y="444" width="1" height="20" fill="#ffffff" />
<rect x="947" y="462" width="54" height="1" fill="#d0d0d8" />
<rect x="1000" y="445" width="1" height="18" fill="#d0d0d8" />
<text x="952" y="457" font-family="Liberation Serif" font-size="13.5" font-weight="normal" fill="#808080" stroke="#808080" stroke-width="0.18" text-anchor="start" textLength="21.5" lengthAdjust="spacingAndGlyphs" >20.0</text>
<text x="875" y="458" font-family="Liberation Serif" font-size="13.5" font-weight="normal" fill="#000" stroke="#000" stroke-width="0.18" text-anchor="start" textLength="64.3" lengthAdjust="spacingAndGlyphs" >Hyperb.3dB</text>
<text x="1008" y="457" font-family="Liberation Serif" font-size="13.5" font-weight="normal" fill="#000" stroke="#000" stroke-width="0.18" text-anchor="start" textLength="15" lengthAdjust="spacingAndGlyphs" >Hz</text>
<text x="866" y="479" font-family="Liberation Serif" font-size="13.5" font-weight="normal" fill="#000" stroke="#000" stroke-width="0.18" text-anchor="start" textLength="58.3" lengthAdjust="spacingAndGlyphs" >Horn Type</text>
<rect x="932" y="467" width="98" height="34" fill="#a8a8a8" />
<rect x="932" y="467" width="98" height="1" fill="#808080" />
<rect x="932" y="467" width="1" height="34" fill="#808080" />
<rect x="933" y="468" width="96" height="1" fill="#404040" />
<rect x="933" y="468" width="1" height="32" fill="#404040" />
<rect x="932" y="500" width="98" height="1" fill="#ffffff" />
<rect x="1029" y="467" width="1" height="34" fill="#ffffff" />
<rect x="933" y="499" width="96" height="1" fill="#d0d0d8" />
<rect x="1028" y="468" width="1" height="32" fill="#d0d0d8" />
<rect x="934" y="469" width="78" height="15" fill="#0a246a" />
<text x="936" y="481" font-family="Liberation Serif" font-size="13.5" font-weight="normal" fill="#b4b4a4" stroke="#b4b4a4" stroke-width="0.18" text-anchor="start" textLength="39.8" lengthAdjust="spacingAndGlyphs" >Conical</text>
<text x="936" y="496" font-family="Liberation Serif" font-size="13.5" font-weight="normal" fill="#8c8c8c" stroke="#8c8c8c" stroke-width="0.18" text-anchor="start" textLength="61.8" lengthAdjust="spacingAndGlyphs" >Exponential</text>
<rect x="1012" y="469" width="16" height="15" fill="#d0d0d8" />
<rect x="1013" y="470" width="13" height="1" fill="#ffffff" />
<rect x="1013" y="470" width="1" height="12" fill="#ffffff" />
<rect x="1012" y="483" width="16" height="1" fill="#404040" />
<rect x="1027" y="469" width="1" height="15" fill="#404040" />
<rect x="1013" y="482" width="14" height="1" fill="#808080" />
<rect x="1026" y="470" width="1" height="13" fill="#808080" />
<rect x="1019" y="474" width="1" height="1" fill="#000" />
<rect x="1018" y="475" width="3" height="1" fill="#000" />
<rect x="1017" y="476" width="5" height="1" fill="#000" />
<rect x="1012" y="484" width="16" height="15" fill="#d0d0d8" />
<rect x="1013" y="485" width="13" height="1" fill="#ffffff" />
<rect x="1013" y="485" width="1" height="12" fill="#ffffff" />
<rect x="1012" y="498" width="16" height="1" fill="#404040" />
<rect x="1027" y="484" width="1" height="15" fill="#404040" />
<rect x="1013" y="497" width="14" height="1" fill="#808080" />
<rect x="1026" y="485" width="1" height="13" fill="#808080" />
<rect x="1017" y="491" width="5" height="1" fill="#000" />
<rect x="1018" y="492" width="3" height="1" fill="#000" />
<rect x="1019" y="493" width="1" height="1" fill="#000" />
<text x="911" y="519" font-family="Liberation Serif" font-size="13.5" font-weight="normal" fill="#000" stroke="#000" stroke-width="0.18" text-anchor="start" textLength="94.5" lengthAdjust="spacingAndGlyphs" >DIPOLE SYSTEM</text>
<rect x="946" y="523" width="56" height="21" fill="#d0d0d8" />
<rect x="946" y="523" width="56" height="1" fill="#808080" />
<rect x="946" y="523" width="1" height="21" fill="#808080" />
<rect x="947" y="524" width="54" height="1" fill="#404040" />
<rect x="947" y="524" width="1" height="19" fill="#404040" />
<rect x="946" y="543" width="56" height="1" fill="#ffffff" />
<rect x="1001" y="523" width="1" height="21" fill="#ffffff" />
<rect x="947" y="542" width="54" height="1" fill="#d0d0d8" />
<rect x="1000" y="524" width="1" height="19" fill="#d0d0d8" />
<text x="952" y="538" font-family="Liberation Serif" font-size="13.5" font-weight="normal" fill="#808080" stroke="#808080" stroke-width="0.18" text-anchor="start" textLength="15.3" lengthAdjust="spacingAndGlyphs" >0.0</text>
<text x="931" y="537" font-family="Liberation Serif" font-size="13.5" font-weight="normal" fill="#000" stroke="#000" stroke-width="0.18" text-anchor="start" textLength="7.5" lengthAdjust="spacingAndGlyphs" >L</text>
<text x="1008" y="539" font-family="Liberation Serif" font-size="13.5" font-weight="normal" fill="#000" stroke="#000" stroke-width="0.18" text-anchor="start" textLength="9.8" lengthAdjust="spacingAndGlyphs" >m</text>
<rect x="946" y="544" width="56" height="21" fill="#d0d0d8" />
<rect x="946" y="544" width="56" height="1" fill="#808080" />
<rect x="946" y="544" width="1" height="21" fill="#808080" />
<rect x="947" y="545" width="54" height="1" fill="#404040" />
<rect x="947" y="545" width="1" height="19" fill="#404040" />
<rect x="946" y="564" width="56" height="1" fill="#ffffff" />
<rect x="1001" y="544" width="1" height="21" fill="#ffffff" />
<rect x="947" y="563" width="54" height="1" fill="#d0d0d8" />
<rect x="1000" y="545" width="1" height="19" fill="#d0d0d8" />
<text x="952" y="558" font-family="Liberation Serif" font-size="13.5" font-weight="normal" fill="#808080" stroke="#808080" stroke-width="0.18" text-anchor="start" textLength="15.3" lengthAdjust="spacingAndGlyphs" >0.0</text>
<text x="927.5" y="560" font-family="Liberation Serif" font-size="13.5" font-weight="normal" fill="#000" stroke="#000" stroke-width="0.18" text-anchor="start" textLength="12.5" lengthAdjust="spacingAndGlyphs" >W</text>
<text x="1008" y="558" font-family="Liberation Serif" font-size="13.5" font-weight="normal" fill="#000" stroke="#000" stroke-width="0.18" text-anchor="start" textLength="9.8" lengthAdjust="spacingAndGlyphs" >m</text>
</g>
</svg>
</body></html>
